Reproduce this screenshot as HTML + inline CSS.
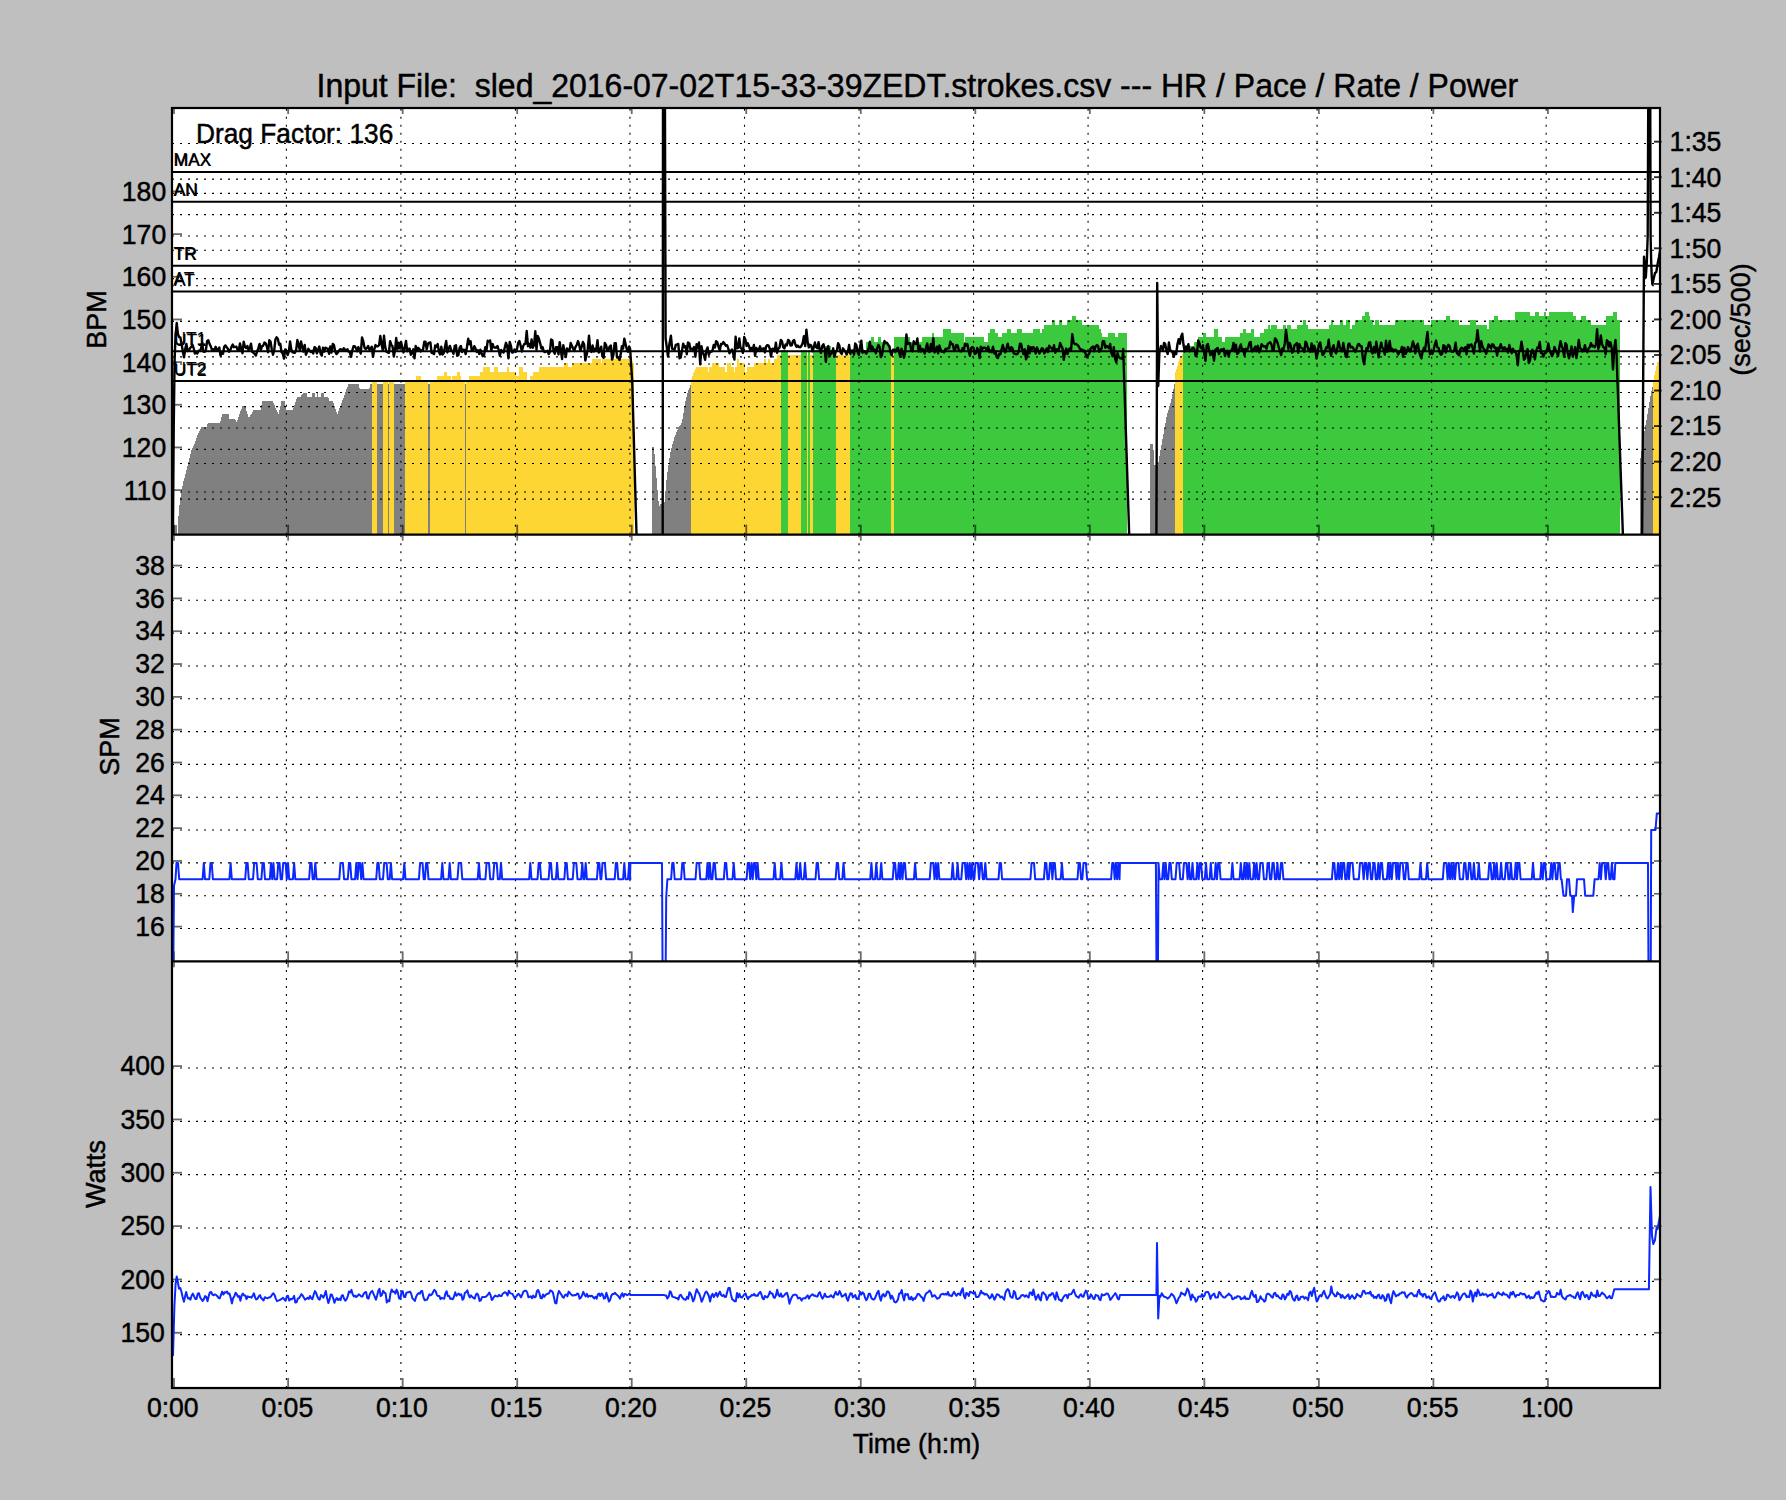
<!DOCTYPE html><html><head><meta charset="utf-8"><title>chart</title><style>html,body{margin:0;padding:0;background:#bfbfbf}svg{display:block}</style></head><body><svg width="1786" height="1500" viewBox="0 0 1786 1500">
<rect width="1786" height="1500" fill="#bfbfbf"/>
<rect x="172.0" y="108.0" width="1488.0" height="1280.0" fill="#fff"/>
<defs><clipPath id="c1"><rect x="172.0" y="108.0" width="1488.0" height="426.66999999999996"/></clipPath><clipPath id="c2"><rect x="172.0" y="534.67" width="1488.0" height="426.6600000000001"/></clipPath><clipPath id="c3"><rect x="172.0" y="961.33" width="1488.0" height="426.66999999999996"/></clipPath></defs>
<g clip-path="url(#c1)" shape-rendering="crispEdges">
<path d="M173.0,534.67V525.1H176.5V533.7H177.5V529.7H178.0V516.3H178.5V509.3H179.0V505.1H179.5V500.8H180.0V496.5H180.5V492.3H181.0V489.6H181.5V487.5H182.0V485.5H182.5V483.4H183.0V481.4H183.5V479.4H184.0V477.5H184.5V475.5H185.0V473.6H185.5V471.6H186.0V469.7H186.5V467.7H187.0V465.7H187.5V463.7H188.0V461.6H188.5V459.6H189.0V457.6H189.5V455.5H190.0V453.5H190.5V451.5H191.0V449.9H191.5V448.9H192.0V447.8H192.5V446.7H193.0V445.7H193.5V444.6H194.0V443.5H194.5V442.2H195.0V440.8H195.5V439.4H196.0V438.0H196.5V436.5H197.0V435.1H197.5V433.7H198.0V432.7H198.5V431.7H199.0V430.7H199.5V429.7H200.0V428.7H200.5V427.7H201.0V427.0H206.0V426.6H206.5V425.4H207.0V424.1H207.5V422.9H208.0V422.7H219.5V422.2H220.0V420.5H220.5V418.8H221.0V417.1H221.5V415.4H222.0V414.2H229.0V418.5H234.5V418.6H235.0V419.9H235.5V421.1H236.0V422.4H236.5V421.7H237.0V420.2H237.5V418.8H238.0V417.3H238.5V415.8H239.0V414.4H239.5V412.9H240.0V411.4H240.5V409.9H241.0V408.5H241.5V407.0H242.0V405.7H245.0V407.2H245.5V408.9H246.0V410.6H246.5V412.2H247.0V413.9H247.5V415.6H248.0V417.3H248.5V418.2H249.0V417.3H249.5V416.3H250.0V415.4H250.5V414.5H251.0V413.6H251.5V412.6H252.0V411.7H252.5V410.8H253.0V409.9H260.5V409.5H261.0V404.7H261.5V401.4H272.5V402.0H273.0V403.1H273.5V404.2H274.0V405.3H274.5V406.4H275.0V407.5H275.5V408.6H276.0V409.7H276.5V410.8H277.0V411.9H277.5V413.0H278.0V414.1H278.5V412.2H279.0V410.0H279.5V407.8H280.0V405.6H280.5V403.4H281.0V401.4H284.5V402.4H285.0V405.7H285.5V409.0H286.0V409.9H292.5V409.5H293.0V408.0H293.5V406.4H294.0V404.9H294.5V403.4H295.0V401.9H295.5V400.3H296.0V398.8H296.5V397.3H297.0V397.1H300.5V396.2H301.0V395.3H301.5V394.5H302.0V393.6H302.5V392.9H306.5V397.1H312.0V392.9H314.5V397.1H317.0V392.9H318.0V397.1H320.5V392.9H323.5V397.1H328.0V398.0H328.5V399.3H329.0V400.5H329.5V401.4H333.0V402.5H333.5V404.0H334.0V405.5H334.5V407.0H335.0V408.6H335.5V410.1H336.0V411.6H336.5V413.1H337.0V413.8H337.5V412.4H338.0V411.1H338.5V409.7H339.0V408.4H339.5V407.0H340.0V405.7H340.5V404.3H341.0V402.9H341.5V401.6H342.0V400.2H342.5V398.9H343.0V397.5H343.5V396.1H344.0V394.8H344.5V393.4H345.0V392.1H345.5V390.7H346.0V389.4H346.5V388.0H347.0V386.6H347.5V385.3H348.0V384.3H358.5V385.9H359.0V387.7H359.5V388.6H369.0V387.8H369.5V385.1H370.0V384.3H372.0V534.67Z" fill="#808080"/>
<path d="M372.0,534.67V380.1H377.0V534.67Z" fill="#fdd633"/>
<path d="M377.0,534.67V384.3H383.0V534.67Z" fill="#808080"/>
<path d="M383.0,534.67V380.1H388.0V534.67Z" fill="#fdd633"/>
<path d="M388.0,534.67V384.3H389.0V534.67Z" fill="#808080"/>
<path d="M389.0,534.67V380.1H394.0V534.67Z" fill="#fdd633"/>
<path d="M394.0,534.67V384.3H405.0V534.67Z" fill="#808080"/>
<path d="M405.0,534.67V380.1H416.0V375.8H420.5V380.1H428.0V534.67Z" fill="#fdd633"/>
<path d="M428.0,534.67V384.3H430.0V534.67Z" fill="#808080"/>
<path d="M430.0,534.67V380.1H436.5V375.8H444.0V371.5H447.0V375.8H450.5V380.1H452.0V375.8H456.5V371.5H460.0V375.8H460.5V380.1H465.0V534.67Z" fill="#fdd633"/>
<path d="M465.0,534.67V384.3H466.0V534.67Z" fill="#808080"/>
<path d="M466.0,534.67V380.1H468.5V375.8H479.5V371.5H482.5V367.3H490.0V371.5H493.5V367.3H498.0V371.5H507.0V367.3H508.5V371.5H515.5V375.8H519.0V367.3H523.0V371.5H527.0V380.1H529.5V375.8H532.5V371.5H538.5V367.3H563.5V363.0H568.0V367.3H572.0V363.0H592.0V358.7H600.5V363.0H601.5V358.7H629.5V363.0H634.0V534.67Z" fill="#fdd633"/>
<path d="M651.5,534.67V447.1H653.5V447.7H654.0V453.6H654.5V459.6H655.0V465.6H655.5V471.5H656.0V477.5H656.5V483.5H657.0V489.5H657.5V495.4H658.0V501.4H658.5V506.7H659.0V505.8H659.5V505.0H660.0V504.1H660.5V503.2H661.0V504.0H661.5V505.5H662.0V507.0H662.5V508.5H663.0V510.1H663.5V506.6H664.0V502.1H664.5V496.6H665.0V491.0H665.5V485.5H666.0V480.0H666.5V475.0H667.0V471.6H667.5V468.1H668.0V464.7H668.5V461.2H669.0V457.8H669.5V454.3H670.0V451.7H670.5V449.9H671.0V448.0H671.5V446.2H672.0V444.4H672.5V442.5H673.0V440.7H673.5V438.9H674.0V437.1H674.5V435.9H675.0V434.7H675.5V433.5H676.0V432.2H676.5V431.0H677.0V429.8H677.5V428.6H678.0V427.4H678.5V426.6H679.0V425.9H679.5V425.3H680.0V424.6H680.5V424.0H681.0V423.3H681.5V422.4H682.0V419.4H682.5V416.3H683.0V413.2H683.5V410.1H684.0V407.1H684.5V404.0H685.0V401.2H685.5V399.3H686.0V397.3H686.5V395.4H687.0V393.4H687.5V391.6H688.0V390.2H688.5V388.8H689.0V387.5H689.5V386.1H690.0V384.7H690.5V383.3H691.0V534.67Z" fill="#808080"/>
<path d="M691.0,534.67V379.2H691.5V377.4H692.0V375.6H692.5V373.8H693.0V372.8H693.5V371.8H694.0V370.9H694.5V369.9H695.0V368.9H695.5V367.9H696.0V367.3H707.5V371.5H709.0V367.3H711.5V363.0H718.5V367.3H725.0V371.5H726.5V363.0H730.5V367.3H734.0V371.5H735.0V367.3H736.5V358.7H739.0V363.0H744.5V371.5H746.5V367.3H754.0V363.0H763.5V358.7H766.0V363.0H768.0V358.7H770.0V363.0H774.0V358.7H777.0V354.5H781.0V534.67Z" fill="#fdd633"/>
<path d="M781.0,534.67V350.2H788.0V534.67Z" fill="#3dc93d"/>
<path d="M788.0,534.67V354.5H801.0V534.67Z" fill="#fdd633"/>
<path d="M801.0,534.67V350.2H807.0V534.67Z" fill="#3dc93d"/>
<path d="M807.0,534.67V354.5H807.5V534.67Z" fill="#fdd633"/>
<path d="M807.5,534.67V350.2H810.0V534.67Z" fill="#3dc93d"/>
<path d="M810.0,534.67V354.5H813.0V534.67Z" fill="#fdd633"/>
<path d="M813.0,534.67V350.2H824.5V345.9H831.0V350.2H836.0V534.67Z" fill="#3dc93d"/>
<path d="M836.0,534.67V354.5H850.0V534.67Z" fill="#fdd633"/>
<path d="M850.0,534.67V350.2H865.5V341.7H871.0V337.4H873.5V341.7H877.5V337.4H881.0V341.7H887.5V345.9H890.5V534.67Z" fill="#3dc93d"/>
<path d="M890.5,534.67V354.5H893.5V534.67Z" fill="#fdd633"/>
<path d="M893.5,534.67V337.4H909.5V341.7H922.0V337.4H931.5V333.1H934.0V337.4H943.0V328.9H950.5V333.1H963.5V341.7H965.0V337.4H983.5V341.7H987.5V333.1H990.0V328.9H994.5V333.1H998.0V337.4H1002.0V333.1H1007.0V328.9H1011.0V333.1H1017.0V328.9H1022.0V333.1H1033.0V328.9H1040.0V333.1H1041.5V328.9H1043.5V324.6H1052.0V320.3H1055.0V324.6H1058.5V320.3H1062.0V324.6H1067.0V320.3H1072.0V316.1H1076.0V320.3H1082.0V324.6H1099.0V328.9H1100.5V333.1H1102.0V337.4H1108.0V333.1H1115.0V337.4H1117.5V333.1H1127.0V534.67Z" fill="#3dc93d"/>
<path d="M1149.5,534.67V444.1H1153.0V449.8H1153.5V458.0H1154.0V465.4H1157.5V464.5H1158.0V461.6H1158.5V458.7H1159.0V455.8H1159.5V452.9H1160.0V450.1H1160.5V447.4H1161.0V444.7H1161.5V442.0H1162.0V439.3H1162.5V436.6H1163.0V433.9H1163.5V431.2H1164.0V428.4H1164.5V425.6H1165.0V422.8H1165.5V420.0H1166.0V417.3H1166.5V414.5H1167.0V412.7H1167.5V411.1H1168.0V409.5H1168.5V407.9H1169.0V406.2H1169.5V404.6H1170.0V403.0H1170.5V401.4H1171.0V399.3H1171.5V396.8H1172.0V394.3H1172.5V391.8H1173.0V389.3H1173.5V386.7H1174.0V384.2H1174.5V383.5H1175.0V534.67Z" fill="#808080"/>
<path d="M1175.0,534.67V371.8H1175.5V370.2H1176.0V368.7H1176.5V367.1H1177.0V365.5H1177.5V363.9H1178.0V362.4H1178.5V360.8H1179.0V359.2H1179.5V358.2H1180.0V357.4H1180.5V356.6H1181.0V355.7H1181.5V354.9H1182.0V354.1H1182.5V353.3H1183.0V534.67Z" fill="#fdd633"/>
<path d="M1183.0,534.67V350.2H1184.0V345.9H1193.5V341.7H1197.5V337.4H1203.0V333.1H1205.5V337.4H1214.0V328.9H1218.0V337.4H1222.0V341.7H1225.0V337.4H1240.0V333.1H1242.5V328.9H1245.5V333.1H1250.5V328.9H1254.0V337.4H1259.5V333.1H1264.0V328.9H1267.5V324.6H1269.5V328.9H1271.0V324.6H1277.0V328.9H1283.0V324.6H1285.5V328.9H1287.0V324.6H1290.5V328.9H1297.0V324.6H1303.0V320.3H1306.0V324.6H1307.5V328.9H1328.5V324.6H1330.5V320.3H1332.5V324.6H1340.0V320.3H1343.0V324.6H1345.5V320.3H1350.0V328.9H1351.5V324.6H1355.0V320.3H1361.5V316.1H1365.0V311.8H1368.5V316.1H1369.5V320.3H1372.5V324.6H1375.0V320.3H1379.0V324.6H1394.5V320.3H1424.0V324.6H1431.0V320.3H1446.0V316.1H1450.0V320.3H1458.5V324.6H1469.5V320.3H1476.0V324.6H1487.0V328.9H1488.5V320.3H1494.0V316.1H1498.0V320.3H1515.0V311.8H1530.0V316.1H1535.0V311.8H1539.0V316.1H1543.5V311.8H1545.5V316.1H1549.0V311.8H1572.5V316.1H1576.0V320.3H1581.0V316.1H1585.5V320.3H1590.5V324.6H1605.5V316.1H1613.0V311.8H1616.5V320.3H1619.5V534.67Z" fill="#3dc93d"/>
<path d="M1639.5,534.67V461.2H1640.0V457.7H1640.5V454.1H1641.0V450.5H1641.5V447.0H1642.0V443.4H1642.5V439.9H1643.0V436.7H1643.5V433.9H1644.0V431.0H1644.5V428.2H1645.0V425.4H1645.5V422.5H1646.0V419.7H1646.5V416.9H1647.0V414.1H1647.5V411.1H1648.0V408.0H1648.5V405.0H1649.0V402.0H1649.5V399.0H1650.0V396.0H1650.5V393.7H1651.0V391.3H1651.5V389.0H1652.0V386.6H1652.5V384.2H1653.0V534.67Z" fill="#808080"/>
<path d="M1653.0,534.67V379.8H1653.5V377.5H1654.0V375.1H1654.5V372.8H1655.0V370.5H1655.5V368.4H1656.0V366.4H1656.5V364.4H1657.0V362.4H1657.5V362.1H1660.0V534.67Z" fill="#fdd633"/>
</g>
<g stroke="#000" stroke-width="1.1" stroke-dasharray="2 6" fill="none">
<line x1="286.39" x2="286.39" y1="534.67" y2="108.0"/>
<line x1="286.39" x2="286.39" y1="961.33" y2="534.67"/>
<line x1="286.39" x2="286.39" y1="1388.0" y2="961.33"/>
<line x1="400.92" x2="400.92" y1="534.67" y2="108.0"/>
<line x1="400.92" x2="400.92" y1="961.33" y2="534.67"/>
<line x1="400.92" x2="400.92" y1="1388.0" y2="961.33"/>
<line x1="515.45" x2="515.45" y1="534.67" y2="108.0"/>
<line x1="515.45" x2="515.45" y1="961.33" y2="534.67"/>
<line x1="515.45" x2="515.45" y1="1388.0" y2="961.33"/>
<line x1="629.97" x2="629.97" y1="534.67" y2="108.0"/>
<line x1="629.97" x2="629.97" y1="961.33" y2="534.67"/>
<line x1="629.97" x2="629.97" y1="1388.0" y2="961.33"/>
<line x1="744.50" x2="744.50" y1="534.67" y2="108.0"/>
<line x1="744.50" x2="744.50" y1="961.33" y2="534.67"/>
<line x1="744.50" x2="744.50" y1="1388.0" y2="961.33"/>
<line x1="859.02" x2="859.02" y1="534.67" y2="108.0"/>
<line x1="859.02" x2="859.02" y1="961.33" y2="534.67"/>
<line x1="859.02" x2="859.02" y1="1388.0" y2="961.33"/>
<line x1="973.55" x2="973.55" y1="534.67" y2="108.0"/>
<line x1="973.55" x2="973.55" y1="961.33" y2="534.67"/>
<line x1="973.55" x2="973.55" y1="1388.0" y2="961.33"/>
<line x1="1088.07" x2="1088.07" y1="534.67" y2="108.0"/>
<line x1="1088.07" x2="1088.07" y1="961.33" y2="534.67"/>
<line x1="1088.07" x2="1088.07" y1="1388.0" y2="961.33"/>
<line x1="1202.60" x2="1202.60" y1="534.67" y2="108.0"/>
<line x1="1202.60" x2="1202.60" y1="961.33" y2="534.67"/>
<line x1="1202.60" x2="1202.60" y1="1388.0" y2="961.33"/>
<line x1="1317.12" x2="1317.12" y1="534.67" y2="108.0"/>
<line x1="1317.12" x2="1317.12" y1="961.33" y2="534.67"/>
<line x1="1317.12" x2="1317.12" y1="1388.0" y2="961.33"/>
<line x1="1431.64" x2="1431.64" y1="534.67" y2="108.0"/>
<line x1="1431.64" x2="1431.64" y1="961.33" y2="534.67"/>
<line x1="1431.64" x2="1431.64" y1="1388.0" y2="961.33"/>
<line x1="1546.17" x2="1546.17" y1="534.67" y2="108.0"/>
<line x1="1546.17" x2="1546.17" y1="961.33" y2="534.67"/>
<line x1="1546.17" x2="1546.17" y1="1388.0" y2="961.33"/>
<line x1="172.0" x2="1660.0" y1="492.00" y2="492.00"/>
<line x1="172.0" x2="1660.0" y1="449.34" y2="449.34"/>
<line x1="172.0" x2="1660.0" y1="406.67" y2="406.67"/>
<line x1="172.0" x2="1660.0" y1="364.00" y2="364.00"/>
<line x1="172.0" x2="1660.0" y1="321.34" y2="321.34"/>
<line x1="172.0" x2="1660.0" y1="278.67" y2="278.67"/>
<line x1="172.0" x2="1660.0" y1="236.00" y2="236.00"/>
<line x1="172.0" x2="1660.0" y1="193.34" y2="193.34"/>
<line x1="172.0" x2="1660.0" y1="143.56" y2="143.56"/>
<line x1="172.0" x2="1660.0" y1="179.11" y2="179.11"/>
<line x1="172.0" x2="1660.0" y1="214.67" y2="214.67"/>
<line x1="172.0" x2="1660.0" y1="250.22" y2="250.22"/>
<line x1="172.0" x2="1660.0" y1="285.78" y2="285.78"/>
<line x1="172.0" x2="1660.0" y1="321.33" y2="321.33"/>
<line x1="172.0" x2="1660.0" y1="356.89" y2="356.89"/>
<line x1="172.0" x2="1660.0" y1="392.44" y2="392.44"/>
<line x1="172.0" x2="1660.0" y1="428.00" y2="428.00"/>
<line x1="172.0" x2="1660.0" y1="463.56" y2="463.56"/>
<line x1="172.0" x2="1660.0" y1="499.11" y2="499.11"/>
<line x1="172.0" x2="1660.0" y1="928.51" y2="928.51"/>
<line x1="172.0" x2="1660.0" y1="895.69" y2="895.69"/>
<line x1="172.0" x2="1660.0" y1="862.87" y2="862.87"/>
<line x1="172.0" x2="1660.0" y1="830.05" y2="830.05"/>
<line x1="172.0" x2="1660.0" y1="797.23" y2="797.23"/>
<line x1="172.0" x2="1660.0" y1="764.41" y2="764.41"/>
<line x1="172.0" x2="1660.0" y1="731.59" y2="731.59"/>
<line x1="172.0" x2="1660.0" y1="698.77" y2="698.77"/>
<line x1="172.0" x2="1660.0" y1="665.94" y2="665.94"/>
<line x1="172.0" x2="1660.0" y1="633.12" y2="633.12"/>
<line x1="172.0" x2="1660.0" y1="600.30" y2="600.30"/>
<line x1="172.0" x2="1660.0" y1="567.48" y2="567.48"/>
<line x1="172.0" x2="1660.0" y1="1334.67" y2="1334.67"/>
<line x1="172.0" x2="1660.0" y1="1281.33" y2="1281.33"/>
<line x1="172.0" x2="1660.0" y1="1228.00" y2="1228.00"/>
<line x1="172.0" x2="1660.0" y1="1174.67" y2="1174.67"/>
<line x1="172.0" x2="1660.0" y1="1121.33" y2="1121.33"/>
<line x1="172.0" x2="1660.0" y1="1068.00" y2="1068.00"/>
</g>
<g stroke="#000" stroke-opacity="0.58" stroke-width="1.8" fill="none">
<line x1="173.0" x2="182.0" y1="490.10" y2="490.10"/>
<line x1="173.0" x2="182.0" y1="447.44" y2="447.44"/>
<line x1="173.0" x2="182.0" y1="404.77" y2="404.77"/>
<line x1="173.0" x2="182.0" y1="362.10" y2="362.10"/>
<line x1="173.0" x2="182.0" y1="319.44" y2="319.44"/>
<line x1="173.0" x2="182.0" y1="276.77" y2="276.77"/>
<line x1="173.0" x2="182.0" y1="234.10" y2="234.10"/>
<line x1="173.0" x2="182.0" y1="191.44" y2="191.44"/>
<line x1="1654.0" x2="1661.5" y1="141.66" y2="141.66"/>
<line x1="1654.0" x2="1661.5" y1="141.66" y2="141.66"/>
<line x1="1654.0" x2="1661.5" y1="177.21" y2="177.21"/>
<line x1="1654.0" x2="1661.5" y1="177.21" y2="177.21"/>
<line x1="1654.0" x2="1661.5" y1="212.77" y2="212.77"/>
<line x1="1654.0" x2="1661.5" y1="212.77" y2="212.77"/>
<line x1="1654.0" x2="1661.5" y1="248.32" y2="248.32"/>
<line x1="1654.0" x2="1661.5" y1="248.32" y2="248.32"/>
<line x1="1654.0" x2="1661.5" y1="283.88" y2="283.88"/>
<line x1="1654.0" x2="1661.5" y1="283.88" y2="283.88"/>
<line x1="1654.0" x2="1661.5" y1="319.43" y2="319.43"/>
<line x1="1654.0" x2="1661.5" y1="319.43" y2="319.43"/>
<line x1="1654.0" x2="1661.5" y1="354.99" y2="354.99"/>
<line x1="1654.0" x2="1661.5" y1="354.99" y2="354.99"/>
<line x1="1654.0" x2="1661.5" y1="390.54" y2="390.54"/>
<line x1="1654.0" x2="1661.5" y1="390.54" y2="390.54"/>
<line x1="1654.0" x2="1661.5" y1="426.10" y2="426.10"/>
<line x1="1654.0" x2="1661.5" y1="426.10" y2="426.10"/>
<line x1="1654.0" x2="1661.5" y1="461.66" y2="461.66"/>
<line x1="1654.0" x2="1661.5" y1="461.66" y2="461.66"/>
<line x1="1654.0" x2="1661.5" y1="497.21" y2="497.21"/>
<line x1="1654.0" x2="1661.5" y1="497.21" y2="497.21"/>
<line x1="173.0" x2="182.0" y1="926.61" y2="926.61"/>
<line x1="1654.0" x2="1661.5" y1="926.61" y2="926.61"/>
<line x1="173.0" x2="182.0" y1="893.79" y2="893.79"/>
<line x1="1654.0" x2="1661.5" y1="893.79" y2="893.79"/>
<line x1="173.0" x2="182.0" y1="860.97" y2="860.97"/>
<line x1="1654.0" x2="1661.5" y1="860.97" y2="860.97"/>
<line x1="173.0" x2="182.0" y1="828.15" y2="828.15"/>
<line x1="1654.0" x2="1661.5" y1="828.15" y2="828.15"/>
<line x1="173.0" x2="182.0" y1="795.33" y2="795.33"/>
<line x1="1654.0" x2="1661.5" y1="795.33" y2="795.33"/>
<line x1="173.0" x2="182.0" y1="762.51" y2="762.51"/>
<line x1="1654.0" x2="1661.5" y1="762.51" y2="762.51"/>
<line x1="173.0" x2="182.0" y1="729.69" y2="729.69"/>
<line x1="1654.0" x2="1661.5" y1="729.69" y2="729.69"/>
<line x1="173.0" x2="182.0" y1="696.87" y2="696.87"/>
<line x1="1654.0" x2="1661.5" y1="696.87" y2="696.87"/>
<line x1="173.0" x2="182.0" y1="664.04" y2="664.04"/>
<line x1="1654.0" x2="1661.5" y1="664.04" y2="664.04"/>
<line x1="173.0" x2="182.0" y1="631.22" y2="631.22"/>
<line x1="1654.0" x2="1661.5" y1="631.22" y2="631.22"/>
<line x1="173.0" x2="182.0" y1="598.40" y2="598.40"/>
<line x1="1654.0" x2="1661.5" y1="598.40" y2="598.40"/>
<line x1="173.0" x2="182.0" y1="565.58" y2="565.58"/>
<line x1="1654.0" x2="1661.5" y1="565.58" y2="565.58"/>
<line x1="173.0" x2="182.0" y1="1332.77" y2="1332.77"/>
<line x1="1654.0" x2="1661.5" y1="1332.77" y2="1332.77"/>
<line x1="173.0" x2="182.0" y1="1279.43" y2="1279.43"/>
<line x1="1654.0" x2="1661.5" y1="1279.43" y2="1279.43"/>
<line x1="173.0" x2="182.0" y1="1226.10" y2="1226.10"/>
<line x1="1654.0" x2="1661.5" y1="1226.10" y2="1226.10"/>
<line x1="173.0" x2="182.0" y1="1172.77" y2="1172.77"/>
<line x1="1654.0" x2="1661.5" y1="1172.77" y2="1172.77"/>
<line x1="173.0" x2="182.0" y1="1119.43" y2="1119.43"/>
<line x1="1654.0" x2="1661.5" y1="1119.43" y2="1119.43"/>
<line x1="173.0" x2="182.0" y1="1066.10" y2="1066.10"/>
<line x1="1654.0" x2="1661.5" y1="1066.10" y2="1066.10"/>
<line x1="174.00" x2="174.00" y1="524.67" y2="533.67"/>
<line x1="174.00" x2="174.00" y1="109.00" y2="114.00"/>
<line x1="174.00" x2="174.00" y1="951.33" y2="960.33"/>
<line x1="174.00" x2="174.00" y1="535.67" y2="540.67"/>
<line x1="174.00" x2="174.00" y1="1378.00" y2="1387.00"/>
<line x1="174.00" x2="174.00" y1="962.33" y2="967.33"/>
<line x1="288.14" x2="288.14" y1="524.67" y2="533.67"/>
<line x1="288.14" x2="288.14" y1="109.00" y2="114.00"/>
<line x1="288.14" x2="288.14" y1="951.33" y2="960.33"/>
<line x1="288.14" x2="288.14" y1="535.67" y2="540.67"/>
<line x1="288.14" x2="288.14" y1="1378.00" y2="1387.00"/>
<line x1="288.14" x2="288.14" y1="962.33" y2="967.33"/>
<line x1="402.67" x2="402.67" y1="524.67" y2="533.67"/>
<line x1="402.67" x2="402.67" y1="109.00" y2="114.00"/>
<line x1="402.67" x2="402.67" y1="951.33" y2="960.33"/>
<line x1="402.67" x2="402.67" y1="535.67" y2="540.67"/>
<line x1="402.67" x2="402.67" y1="1378.00" y2="1387.00"/>
<line x1="402.67" x2="402.67" y1="962.33" y2="967.33"/>
<line x1="517.20" x2="517.20" y1="524.67" y2="533.67"/>
<line x1="517.20" x2="517.20" y1="109.00" y2="114.00"/>
<line x1="517.20" x2="517.20" y1="951.33" y2="960.33"/>
<line x1="517.20" x2="517.20" y1="535.67" y2="540.67"/>
<line x1="517.20" x2="517.20" y1="1378.00" y2="1387.00"/>
<line x1="517.20" x2="517.20" y1="962.33" y2="967.33"/>
<line x1="631.72" x2="631.72" y1="524.67" y2="533.67"/>
<line x1="631.72" x2="631.72" y1="109.00" y2="114.00"/>
<line x1="631.72" x2="631.72" y1="951.33" y2="960.33"/>
<line x1="631.72" x2="631.72" y1="535.67" y2="540.67"/>
<line x1="631.72" x2="631.72" y1="1378.00" y2="1387.00"/>
<line x1="631.72" x2="631.72" y1="962.33" y2="967.33"/>
<line x1="746.25" x2="746.25" y1="524.67" y2="533.67"/>
<line x1="746.25" x2="746.25" y1="109.00" y2="114.00"/>
<line x1="746.25" x2="746.25" y1="951.33" y2="960.33"/>
<line x1="746.25" x2="746.25" y1="535.67" y2="540.67"/>
<line x1="746.25" x2="746.25" y1="1378.00" y2="1387.00"/>
<line x1="746.25" x2="746.25" y1="962.33" y2="967.33"/>
<line x1="860.77" x2="860.77" y1="524.67" y2="533.67"/>
<line x1="860.77" x2="860.77" y1="109.00" y2="114.00"/>
<line x1="860.77" x2="860.77" y1="951.33" y2="960.33"/>
<line x1="860.77" x2="860.77" y1="535.67" y2="540.67"/>
<line x1="860.77" x2="860.77" y1="1378.00" y2="1387.00"/>
<line x1="860.77" x2="860.77" y1="962.33" y2="967.33"/>
<line x1="975.30" x2="975.30" y1="524.67" y2="533.67"/>
<line x1="975.30" x2="975.30" y1="109.00" y2="114.00"/>
<line x1="975.30" x2="975.30" y1="951.33" y2="960.33"/>
<line x1="975.30" x2="975.30" y1="535.67" y2="540.67"/>
<line x1="975.30" x2="975.30" y1="1378.00" y2="1387.00"/>
<line x1="975.30" x2="975.30" y1="962.33" y2="967.33"/>
<line x1="1089.82" x2="1089.82" y1="524.67" y2="533.67"/>
<line x1="1089.82" x2="1089.82" y1="109.00" y2="114.00"/>
<line x1="1089.82" x2="1089.82" y1="951.33" y2="960.33"/>
<line x1="1089.82" x2="1089.82" y1="535.67" y2="540.67"/>
<line x1="1089.82" x2="1089.82" y1="1378.00" y2="1387.00"/>
<line x1="1089.82" x2="1089.82" y1="962.33" y2="967.33"/>
<line x1="1204.35" x2="1204.35" y1="524.67" y2="533.67"/>
<line x1="1204.35" x2="1204.35" y1="109.00" y2="114.00"/>
<line x1="1204.35" x2="1204.35" y1="951.33" y2="960.33"/>
<line x1="1204.35" x2="1204.35" y1="535.67" y2="540.67"/>
<line x1="1204.35" x2="1204.35" y1="1378.00" y2="1387.00"/>
<line x1="1204.35" x2="1204.35" y1="962.33" y2="967.33"/>
<line x1="1318.87" x2="1318.87" y1="524.67" y2="533.67"/>
<line x1="1318.87" x2="1318.87" y1="109.00" y2="114.00"/>
<line x1="1318.87" x2="1318.87" y1="951.33" y2="960.33"/>
<line x1="1318.87" x2="1318.87" y1="535.67" y2="540.67"/>
<line x1="1318.87" x2="1318.87" y1="1378.00" y2="1387.00"/>
<line x1="1318.87" x2="1318.87" y1="962.33" y2="967.33"/>
<line x1="1433.39" x2="1433.39" y1="524.67" y2="533.67"/>
<line x1="1433.39" x2="1433.39" y1="109.00" y2="114.00"/>
<line x1="1433.39" x2="1433.39" y1="951.33" y2="960.33"/>
<line x1="1433.39" x2="1433.39" y1="535.67" y2="540.67"/>
<line x1="1433.39" x2="1433.39" y1="1378.00" y2="1387.00"/>
<line x1="1433.39" x2="1433.39" y1="962.33" y2="967.33"/>
<line x1="1547.92" x2="1547.92" y1="524.67" y2="533.67"/>
<line x1="1547.92" x2="1547.92" y1="109.00" y2="114.00"/>
<line x1="1547.92" x2="1547.92" y1="951.33" y2="960.33"/>
<line x1="1547.92" x2="1547.92" y1="535.67" y2="540.67"/>
<line x1="1547.92" x2="1547.92" y1="1378.00" y2="1387.00"/>
<line x1="1547.92" x2="1547.92" y1="962.33" y2="967.33"/>
</g>
<g stroke="#000" stroke-width="2" fill="none">
<line x1="172.0" x2="1660.0" y1="172.00" y2="172.00"/>
<line x1="172.0" x2="1660.0" y1="201.87" y2="201.87"/>
<line x1="172.0" x2="1660.0" y1="265.87" y2="265.87"/>
<line x1="172.0" x2="1660.0" y1="291.47" y2="291.47"/>
<line x1="172.0" x2="1660.0" y1="351.20" y2="351.20"/>
<line x1="172.0" x2="1660.0" y1="381.07" y2="381.07"/>
</g>
<g font-family="Liberation Sans, sans-serif" font-size="17.2" fill="#000">
<text x="174.3" y="166.4">MAX</text>
<text x="174.3" y="196.3">AN</text>
<text x="174.3" y="260.3">TR</text>
<text x="174.3" y="285.9">AT</text>
<text x="174.3" y="345.6">UT1</text>
<text x="174.3" y="375.5">UT2</text>
</g>
<path d="M172.9,537.7 L173.7,430.0 L174.6,360.0 L175.6,335.0 L176.7,323.0 L177.9,334.0 L179.1,337.0 L180.3,337.3 L181.4,343.0 L182.6,350.0 L184.0,357.3 L185.2,349.0 L186.4,344.0 L187.6,351.0 L188.8,350.7 L190.0,348.2 L191.2,346.9 L192.5,344.8 L193.7,348.2 L194.9,353.6 L196.1,352.0 L197.3,353.5 L198.6,350.8 L199.8,350.8 L201.0,348.8 L202.2,342.8 L203.4,351.6 L204.7,351.8 L205.9,350.1 L207.1,341.2 L208.3,340.2 L209.5,343.8 L210.8,346.6 L212.0,349.7 L213.2,349.2 L214.4,350.5 L215.6,346.8 L216.9,349.9 L218.1,350.2 L219.3,347.5 L220.5,355.7 L221.7,353.0 L223.0,353.7 L224.2,346.7 L225.4,345.4 L226.6,347.1 L227.8,348.8 L229.1,351.7 L230.3,350.2 L231.5,346.8 L232.7,344.6 L233.9,347.2 L235.2,346.9 L236.4,346.8 L237.6,349.9 L238.8,350.1 L240.0,343.5 L241.3,349.3 L242.5,353.2 L243.7,341.7 L244.9,346.5 L246.1,348.0 L247.4,346.0 L248.6,350.5 L249.8,348.2 L251.0,343.6 L252.2,351.8 L253.5,352.7 L254.7,354.0 L255.9,355.5 L257.1,351.2 L258.3,348.6 L259.6,343.9 L260.8,349.9 L262.0,346.3 L263.2,345.6 L264.4,342.6 L265.7,343.5 L266.9,346.7 L268.1,352.2 L269.3,340.3 L270.5,341.5 L271.8,349.5 L273.0,354.8 L274.2,350.5 L275.4,339.5 L276.6,337.2 L277.9,338.9 L279.1,344.8 L280.3,343.8 L281.5,352.1 L282.7,353.3 L284.0,358.6 L285.2,349.4 L286.4,350.9 L287.6,355.0 L288.8,351.7 L290.1,341.5 L291.3,349.4 L292.5,352.3 L293.7,352.6 L294.9,352.9 L296.2,349.4 L297.4,340.0 L298.6,344.8 L299.8,350.0 L301.0,341.4 L302.3,347.1 L303.5,351.6 L304.7,344.9 L305.9,354.7 L307.1,351.9 L308.4,348.8 L309.6,350.6 L310.8,352.0 L312.0,350.8 L313.2,353.5 L314.5,347.1 L315.7,347.9 L316.9,353.4 L318.1,349.6 L319.3,346.5 L320.6,353.6 L321.8,355.6 L323.0,347.6 L324.2,351.6 L325.4,347.7 L326.7,348.3 L327.9,348.7 L329.1,353.8 L330.3,346.5 L331.5,352.5 L332.8,344.0 L334.0,345.1 L335.2,351.4 L336.4,354.1 L337.6,352.9 L338.9,350.5 L340.1,349.3 L341.3,349.5 L342.5,350.7 L343.7,348.2 L345.0,349.7 L346.2,350.8 L347.4,349.2 L348.6,351.7 L349.8,352.3 L351.1,356.9 L352.3,350.4 L353.5,346.3 L354.7,346.1 L355.9,348.1 L357.2,351.3 L358.4,347.1 L359.6,350.1 L360.8,353.5 L362.0,337.5 L363.3,341.3 L364.5,347.8 L365.7,349.2 L366.9,348.1 L368.1,346.0 L369.4,349.7 L370.6,348.4 L371.8,346.8 L373.0,356.9 L374.2,349.8 L375.5,345.1 L376.7,346.3 L377.9,346.2 L379.1,345.1 L380.3,335.9 L381.6,344.2 L382.8,350.3 L384.0,335.8 L385.2,346.9 L386.4,351.7 L387.7,352.4 L388.9,352.9 L390.1,341.2 L391.3,344.7 L392.5,346.2 L393.8,356.6 L395.0,350.5 L396.2,338.0 L397.4,349.2 L398.6,342.7 L399.9,348.4 L401.1,342.0 L402.3,348.1 L403.5,352.4 L404.7,347.9 L406.0,341.0 L407.2,351.2 L408.4,348.9 L409.6,348.6 L410.8,354.8 L412.1,353.0 L413.3,349.3 L414.5,358.3 L415.7,345.9 L416.9,351.0 L418.2,347.8 L419.4,349.1 L420.6,351.4 L421.8,350.1 L423.0,350.0 L424.3,341.6 L425.5,341.6 L426.7,349.2 L427.9,344.1 L429.1,342.6 L430.4,342.5 L431.6,352.9 L432.8,353.0 L434.0,354.1 L435.2,345.4 L436.5,346.9 L437.7,344.1 L438.9,351.6 L440.1,354.5 L441.3,346.6 L442.6,354.5 L443.8,353.0 L445.0,346.8 L446.2,341.0 L447.4,352.5 L448.7,348.3 L449.9,345.9 L451.1,349.7 L452.3,351.0 L453.5,353.9 L454.8,345.8 L456.0,345.3 L457.2,355.9 L458.4,355.0 L459.6,348.0 L460.9,345.9 L462.1,352.1 L463.3,349.6 L464.5,349.9 L465.7,354.1 L467.0,346.8 L468.2,338.8 L469.4,344.3 L470.6,341.3 L471.8,350.8 L473.1,349.9 L474.3,346.2 L475.5,348.6 L476.7,351.9 L477.9,350.2 L479.2,353.9 L480.4,349.7 L481.6,353.6 L482.8,356.2 L484.0,355.5 L485.3,347.3 L486.5,350.3 L487.7,340.7 L488.9,341.6 L490.1,340.4 L491.4,350.6 L492.6,344.0 L493.8,347.4 L495.0,347.5 L496.2,347.7 L497.5,346.0 L498.7,350.0 L499.9,355.7 L501.1,350.0 L502.3,351.1 L503.6,352.6 L504.8,347.4 L506.0,342.8 L507.2,346.0 L508.4,358.4 L509.7,342.0 L510.9,345.6 L512.1,352.6 L513.3,352.3 L514.5,349.5 L515.8,351.8 L517.0,348.9 L518.2,342.8 L519.4,341.0 L520.6,345.5 L521.9,351.5 L523.1,346.3 L524.3,344.0 L525.5,343.9 L526.7,331.0 L528.0,346.3 L529.2,343.9 L530.4,347.7 L531.6,339.4 L532.8,347.9 L534.1,344.8 L535.3,331.3 L536.5,349.9 L537.7,336.0 L538.9,338.6 L540.2,343.5 L541.4,348.6 L542.6,347.1 L543.8,351.5 L545.0,352.1 L546.3,351.5 L547.5,350.7 L548.7,354.1 L549.9,351.9 L551.1,339.5 L552.4,340.5 L553.6,351.2 L554.8,353.7 L556.0,347.3 L557.2,347.1 L558.5,354.3 L559.7,342.2 L560.9,350.5 L562.1,359.1 L563.3,345.3 L564.6,351.5 L565.8,357.0 L567.0,348.4 L568.2,350.4 L569.4,351.1 L570.7,343.0 L571.9,345.8 L573.1,348.7 L574.3,350.9 L575.5,346.9 L576.8,344.8 L578.0,341.1 L579.2,344.7 L580.4,350.8 L581.6,347.2 L582.9,342.0 L584.1,344.2 L585.3,360.5 L586.5,355.4 L587.7,349.4 L589.0,335.7 L590.2,349.1 L591.4,352.0 L592.6,345.5 L593.8,351.5 L595.1,348.7 L596.3,349.5 L597.5,340.2 L598.7,352.5 L599.9,350.6 L601.2,346.7 L602.4,356.3 L603.6,357.8 L604.8,342.9 L606.0,344.8 L607.3,350.0 L608.5,349.8 L609.7,346.4 L610.9,345.6 L612.1,359.6 L613.4,355.0 L614.6,343.1 L615.8,343.1 L617.0,357.5 L618.2,357.1 L619.5,359.9 L620.7,354.3 L621.9,346.1 L623.1,348.6 L624.3,338.6 L625.6,344.3 L626.8,349.3 L628.0,351.7 L629.2,346.5 L630.1,348.6 L631.0,362.0 L632.2,381.0 L636.6,537.7 L662.7,537.7 L663.0,88.0 L664.9,88.0 L665.6,338.0 L666.6,346.0 L668.0,356.5 L669.4,344.0 L670.9,335.7 L672.2,349.0 L673.4,349.1 L674.6,349.5 L675.8,344.9 L677.1,344.4 L678.3,343.9 L679.5,358.3 L680.7,357.5 L681.9,351.1 L683.2,343.7 L684.4,347.2 L685.6,346.2 L686.8,354.2 L688.0,342.4 L689.3,343.4 L690.5,349.6 L691.7,348.7 L692.9,349.5 L694.1,347.0 L695.4,356.7 L696.6,344.1 L697.8,348.2 L699.0,342.5 L700.2,364.4 L701.5,346.3 L702.7,352.4 L703.9,354.9 L705.1,359.8 L706.3,350.5 L707.6,347.4 L708.8,354.9 L710.0,351.7 L711.2,351.7 L712.4,351.1 L713.7,344.9 L714.9,347.6 L716.1,341.3 L717.3,342.2 L718.5,346.8 L719.8,350.4 L721.0,344.0 L722.2,344.1 L723.4,342.1 L724.6,343.8 L725.9,345.7 L727.1,345.2 L728.3,348.6 L729.5,353.3 L730.7,350.9 L732.0,349.5 L733.2,353.7 L734.4,359.6 L735.6,336.7 L736.8,348.4 L738.1,347.9 L739.3,338.5 L740.5,347.9 L741.7,348.8 L742.9,352.8 L744.2,337.0 L745.4,339.7 L746.6,345.9 L747.8,343.3 L749.0,346.2 L750.3,350.3 L751.5,347.9 L752.7,350.0 L753.9,345.0 L755.1,355.8 L756.4,348.0 L757.6,351.0 L758.8,349.7 L760.0,346.3 L761.2,350.1 L762.5,348.9 L763.7,348.3 L764.9,352.4 L766.1,346.5 L767.3,345.1 L768.6,345.7 L769.8,348.7 L771.0,356.6 L772.2,349.0 L773.4,348.6 L774.7,351.2 L775.9,342.6 L777.1,352.8 L778.3,348.7 L779.5,347.7 L780.8,339.9 L782.0,341.3 L783.2,347.2 L784.4,348.4 L785.6,344.4 L786.9,345.3 L788.1,339.9 L789.3,341.0 L790.5,345.5 L791.7,345.3 L793.0,340.9 L794.2,340.1 L795.4,344.7 L796.6,346.8 L797.8,345.6 L799.1,347.1 L800.3,347.2 L801.5,345.7 L802.7,343.0 L803.9,336.1 L805.2,346.1 L806.4,329.6 L807.6,341.2 L808.8,347.4 L810.0,344.8 L811.3,345.5 L812.5,351.4 L813.7,347.7 L814.9,342.5 L816.1,347.1 L817.4,348.3 L818.6,342.1 L819.8,350.8 L821.0,352.8 L822.2,346.0 L823.5,344.3 L824.7,348.7 L825.9,361.8 L827.1,348.5 L828.3,346.1 L829.6,356.3 L830.8,353.6 L832.0,353.0 L833.2,348.3 L834.4,356.9 L835.7,352.0 L836.9,350.8 L838.1,343.1 L839.3,345.3 L840.5,352.4 L841.8,353.9 L843.0,348.3 L844.2,350.3 L845.4,351.8 L846.6,354.6 L847.9,351.9 L849.1,345.0 L850.3,353.8 L851.5,350.6 L852.7,350.5 L854.0,354.6 L855.2,343.5 L856.4,345.2 L857.6,352.1 L858.8,354.9 L860.1,346.4 L861.3,340.6 L862.5,352.7 L863.7,351.0 L864.9,352.0 L866.2,353.6 L867.4,351.6 L868.6,348.5 L869.8,341.7 L871.0,349.1 L872.3,346.6 L873.5,350.0 L874.7,349.7 L875.9,353.3 L877.1,348.3 L878.4,344.8 L879.6,347.1 L880.8,357.0 L882.0,355.1 L883.2,346.8 L884.5,341.0 L885.7,343.1 L886.9,342.7 L888.1,344.7 L889.3,346.1 L890.6,352.4 L891.8,355.3 L893.0,349.7 L894.2,349.7 L895.4,351.9 L896.7,348.6 L897.9,347.7 L899.1,351.9 L900.3,356.8 L901.5,348.7 L902.8,352.6 L904.0,357.7 L905.2,351.9 L906.4,334.4 L907.6,344.0 L908.9,342.9 L910.1,343.4 L911.3,350.5 L912.5,351.3 L913.7,341.3 L915.0,343.6 L916.2,344.0 L917.4,338.4 L918.6,351.6 L919.8,345.7 L921.1,351.5 L922.3,349.1 L923.5,349.6 L924.7,353.6 L925.9,348.2 L927.2,343.4 L928.4,350.9 L929.6,352.0 L930.8,344.1 L932.0,349.5 L933.3,338.1 L934.5,352.5 L935.7,351.1 L936.9,346.7 L938.1,353.2 L939.4,345.5 L940.6,349.2 L941.8,351.7 L943.0,351.0 L944.2,352.4 L945.5,348.8 L946.7,349.1 L947.9,348.3 L949.1,348.4 L950.3,341.7 L951.6,344.1 L952.8,344.2 L954.0,350.1 L955.2,349.3 L956.4,344.9 L957.7,345.5 L958.9,350.5 L960.1,351.1 L961.3,351.4 L962.5,348.2 L963.8,350.5 L965.0,343.6 L966.2,345.5 L967.4,344.1 L968.6,350.8 L969.9,355.8 L971.1,348.2 L972.3,347.1 L973.5,347.8 L974.7,354.1 L976.0,353.2 L977.2,348.0 L978.4,350.6 L979.6,358.0 L980.8,346.7 L982.1,349.4 L983.3,347.8 L984.5,347.6 L985.7,348.3 L986.9,350.7 L988.2,346.6 L989.4,352.1 L990.6,350.4 L991.8,352.3 L993.0,346.7 L994.3,353.6 L995.5,351.2 L996.7,357.1 L997.9,358.1 L999.1,354.0 L1000.4,354.3 L1001.6,349.4 L1002.8,345.0 L1004.0,349.4 L1005.2,352.4 L1006.5,348.4 L1007.7,343.6 L1008.9,348.3 L1010.1,349.9 L1011.3,347.2 L1012.6,348.5 L1013.8,353.4 L1015.0,353.8 L1016.2,354.3 L1017.4,354.0 L1018.7,351.7 L1019.9,343.7 L1021.1,343.9 L1022.3,349.4 L1023.5,354.1 L1024.8,349.3 L1026.0,359.4 L1027.2,356.3 L1028.4,346.0 L1029.6,353.2 L1030.9,347.2 L1032.1,348.8 L1033.3,347.0 L1034.5,348.7 L1035.7,353.5 L1037.0,347.4 L1038.2,351.0 L1039.4,353.5 L1040.6,350.8 L1041.8,348.3 L1043.1,348.9 L1044.3,353.4 L1045.5,351.0 L1046.7,348.4 L1047.9,352.1 L1049.2,345.8 L1050.4,347.4 L1051.6,348.3 L1052.8,349.6 L1054.0,345.2 L1055.3,352.7 L1056.5,349.5 L1057.7,349.1 L1058.9,349.2 L1060.1,343.0 L1061.4,346.0 L1062.6,348.6 L1063.8,359.8 L1065.0,352.3 L1066.2,348.6 L1067.5,354.1 L1068.7,349.8 L1069.9,348.2 L1071.1,349.8 L1072.3,334.1 L1073.6,342.6 L1074.8,344.2 L1076.0,343.9 L1077.2,344.8 L1078.4,345.9 L1079.7,348.5 L1080.9,349.9 L1082.1,349.4 L1083.3,351.3 L1084.5,350.6 L1085.8,354.6 L1087.0,357.3 L1088.2,355.0 L1089.4,353.2 L1090.6,348.8 L1091.9,347.3 L1093.1,346.5 L1094.3,351.3 L1095.5,346.7 L1096.7,345.1 L1098.0,345.8 L1099.2,351.8 L1100.4,349.4 L1101.6,348.8 L1102.8,341.2 L1104.1,341.1 L1105.3,347.9 L1106.5,345.9 L1107.7,346.5 L1108.9,348.2 L1110.2,343.9 L1111.4,353.3 L1112.6,356.2 L1113.8,347.2 L1115.0,358.3 L1116.3,362.3 L1117.5,353.1 L1118.7,356.9 L1119.9,358.0 L1121.1,358.3 L1122.4,358.8 L1123.2,349.0 L1129.3,537.7 L1156.4,537.7 L1157.2,283.0 L1158.2,386.0 L1159.4,352.0 L1161.0,346.0 L1163.0,350.0 L1164.0,342.9 L1165.2,344.0 L1166.4,350.4 L1167.7,354.0 L1168.9,342.5 L1170.1,349.7 L1171.3,351.4 L1172.5,351.9 L1173.8,356.8 L1175.0,352.6 L1176.2,354.0 L1177.4,344.5 L1178.6,339.2 L1179.9,343.7 L1181.1,336.4 L1182.3,333.7 L1183.5,344.8 L1184.7,351.5 L1186.0,346.5 L1187.2,349.5 L1188.4,344.1 L1189.6,351.2 L1190.8,350.9 L1192.1,348.6 L1193.3,347.8 L1194.5,349.4 L1195.7,356.0 L1196.9,354.3 L1198.2,340.4 L1199.4,343.1 L1200.6,347.8 L1201.8,348.6 L1203.0,345.3 L1204.3,354.2 L1205.5,360.7 L1206.7,345.5 L1207.9,343.9 L1209.1,350.0 L1210.4,355.1 L1211.6,353.9 L1212.8,350.8 L1214.0,360.7 L1215.2,350.0 L1216.5,349.1 L1217.7,347.9 L1218.9,354.0 L1220.1,350.6 L1221.3,349.3 L1222.6,350.4 L1223.8,348.8 L1225.0,356.1 L1226.2,351.1 L1227.4,350.7 L1228.7,356.5 L1229.9,351.0 L1231.1,350.6 L1232.3,349.2 L1233.5,342.9 L1234.8,351.4 L1236.0,344.8 L1237.2,354.0 L1238.4,352.8 L1239.6,347.4 L1240.9,344.4 L1242.1,351.1 L1243.3,349.1 L1244.5,355.4 L1245.7,348.6 L1247.0,349.4 L1248.2,348.3 L1249.4,343.0 L1250.6,341.9 L1251.8,351.4 L1253.1,351.1 L1254.3,348.3 L1255.5,346.5 L1256.7,351.0 L1257.9,345.8 L1259.2,352.2 L1260.4,350.1 L1261.6,344.2 L1262.8,345.5 L1264.0,346.7 L1265.3,346.2 L1266.5,348.7 L1267.7,344.0 L1268.9,343.1 L1270.1,342.2 L1271.4,344.1 L1272.6,350.4 L1273.8,349.5 L1275.0,338.4 L1276.2,339.6 L1277.5,342.8 L1278.7,347.2 L1279.9,350.8 L1281.1,355.2 L1282.3,348.5 L1283.6,349.3 L1284.8,343.4 L1286.0,329.7 L1287.2,339.4 L1288.4,349.0 L1289.7,342.9 L1290.9,346.2 L1292.1,352.7 L1293.3,351.6 L1294.5,345.3 L1295.8,344.2 L1297.0,343.0 L1298.2,352.8 L1299.4,344.1 L1300.6,347.4 L1301.9,348.4 L1303.1,348.7 L1304.3,352.0 L1305.5,341.6 L1306.7,343.5 L1308.0,349.1 L1309.2,349.0 L1310.4,352.0 L1311.6,343.5 L1312.8,351.6 L1314.1,345.7 L1315.3,349.1 L1316.5,358.6 L1317.7,352.7 L1318.9,344.5 L1320.2,342.5 L1321.4,349.3 L1322.6,355.1 L1323.8,353.9 L1325.0,351.0 L1326.3,347.3 L1327.5,347.9 L1328.7,339.7 L1329.9,349.9 L1331.1,355.8 L1332.4,348.0 L1333.6,345.2 L1334.8,350.6 L1336.0,353.3 L1337.2,349.1 L1338.5,341.5 L1339.7,346.6 L1340.9,350.3 L1342.1,351.2 L1343.3,342.9 L1344.6,350.0 L1345.8,356.7 L1347.0,357.0 L1348.2,344.3 L1349.4,343.5 L1350.7,347.6 L1351.9,346.7 L1353.1,347.7 L1354.3,350.6 L1355.5,352.0 L1356.8,347.8 L1358.0,344.3 L1359.2,344.0 L1360.4,346.2 L1361.6,346.1 L1362.9,358.6 L1364.1,364.2 L1365.3,355.1 L1366.5,348.1 L1367.7,349.1 L1369.0,342.6 L1370.2,342.3 L1371.4,351.7 L1372.6,353.5 L1373.8,346.9 L1375.1,352.6 L1376.3,341.8 L1377.5,350.1 L1378.7,357.3 L1379.9,348.4 L1381.2,342.6 L1382.4,347.9 L1383.6,349.2 L1384.8,354.6 L1386.0,340.7 L1387.3,351.9 L1388.5,348.8 L1389.7,340.9 L1390.9,350.4 L1392.1,348.7 L1393.4,351.4 L1394.6,349.8 L1395.8,349.7 L1397.0,351.2 L1398.2,354.5 L1399.5,351.7 L1400.7,351.7 L1401.9,346.9 L1403.1,356.8 L1404.3,347.6 L1405.6,353.9 L1406.8,351.4 L1408.0,347.1 L1409.2,349.8 L1410.4,351.5 L1411.7,346.7 L1412.9,341.4 L1414.1,345.3 L1415.3,353.4 L1416.5,346.1 L1417.8,343.8 L1419.0,350.7 L1420.2,355.5 L1421.4,358.4 L1422.6,351.7 L1423.9,347.8 L1425.1,350.3 L1426.3,340.6 L1427.5,332.0 L1428.7,346.0 L1430.0,354.3 L1431.2,352.0 L1432.4,354.0 L1433.6,350.1 L1434.8,344.6 L1436.1,340.6 L1437.3,347.4 L1438.5,347.8 L1439.7,352.5 L1440.9,354.7 L1442.2,353.8 L1443.4,345.3 L1444.6,345.8 L1445.8,352.6 L1447.0,347.8 L1448.3,344.8 L1449.5,345.8 L1450.7,350.6 L1451.9,351.9 L1453.1,351.7 L1454.4,349.9 L1455.6,342.7 L1456.8,352.7 L1458.0,354.3 L1459.2,355.2 L1460.5,348.8 L1461.7,347.7 L1462.9,348.6 L1464.1,349.7 L1465.3,347.2 L1466.6,354.2 L1467.8,344.6 L1469.0,347.7 L1470.2,344.9 L1471.4,344.4 L1472.7,348.0 L1473.9,353.6 L1475.1,343.2 L1476.3,341.7 L1477.5,330.2 L1478.8,342.2 L1480.0,351.5 L1481.2,341.1 L1482.4,346.4 L1483.6,348.7 L1484.9,350.1 L1486.1,353.8 L1487.3,349.6 L1488.5,344.4 L1489.7,345.8 L1491.0,348.6 L1492.2,344.3 L1493.4,344.6 L1494.6,348.0 L1495.8,347.7 L1497.1,355.5 L1498.3,347.8 L1499.5,349.1 L1500.7,344.2 L1501.9,347.7 L1503.2,349.5 L1504.4,347.2 L1505.6,349.3 L1506.8,348.9 L1508.0,352.6 L1509.3,345.0 L1510.5,349.5 L1511.7,353.2 L1512.9,348.8 L1514.1,351.9 L1515.4,351.0 L1516.6,355.5 L1517.8,365.2 L1519.0,350.9 L1520.2,350.8 L1521.5,341.7 L1522.7,348.6 L1523.9,359.7 L1525.1,358.5 L1526.3,353.2 L1527.6,349.1 L1528.8,363.1 L1530.0,360.5 L1531.2,352.4 L1532.4,349.7 L1533.7,353.8 L1534.9,359.4 L1536.1,351.5 L1537.3,347.6 L1538.5,348.1 L1539.8,341.9 L1541.0,353.1 L1542.2,353.1 L1543.4,356.6 L1544.6,353.4 L1545.9,352.9 L1547.1,350.4 L1548.3,343.5 L1549.5,350.0 L1550.7,352.8 L1552.0,356.2 L1553.2,353.6 L1554.4,347.0 L1555.6,349.8 L1556.8,352.7 L1558.1,355.9 L1559.3,347.5 L1560.5,341.3 L1561.7,345.9 L1562.9,349.1 L1564.2,356.8 L1565.4,343.2 L1566.6,344.8 L1567.8,353.8 L1569.0,358.3 L1570.3,352.7 L1571.5,346.5 L1572.7,356.4 L1573.9,353.0 L1575.1,347.1 L1576.4,358.1 L1577.6,349.8 L1578.8,339.9 L1580.0,348.4 L1581.2,348.8 L1582.5,351.5 L1583.7,350.2 L1584.9,345.2 L1586.1,350.4 L1587.3,352.2 L1588.6,348.4 L1589.8,347.1 L1591.0,343.2 L1592.2,346.4 L1593.4,345.8 L1594.7,347.3 L1595.9,345.0 L1597.1,329.2 L1598.3,349.0 L1599.5,345.3 L1600.8,335.5 L1602.0,343.6 L1603.2,347.1 L1604.4,347.6 L1605.6,354.2 L1606.9,340.3 L1608.1,341.3 L1609.3,346.4 L1610.5,342.3 L1611.7,347.8 L1613.0,369.5 L1614.4,347.0 L1615.5,340.0 L1616.5,353.0 L1623.0,537.7 L1642.1,537.7 L1644.0,256.7 L1645.0,268.0 L1645.8,277.5 L1646.8,262.0 L1647.7,236.0 L1648.3,88.0 L1650.2,88.0 L1650.6,236.0 L1651.2,262.0 L1651.7,276.0 L1652.4,284.5 L1653.6,279.0 L1655.0,273.0 L1656.3,272.0 L1657.6,264.0 L1659.0,257.0 L1661.0,245.0" fill="none" stroke="#000" stroke-width="2.4" stroke-linejoin="round" clip-path="url(#c1)"/>
<path d="M173.2,975.0 L174.0,885.8 L175.5,879.3 L176.5,862.9 L178.0,862.9 L179.2,879.3 L180.0,879.3 L202.6,879.3 L203.8,862.9 L203.8,862.9 L205.0,879.3 L209.3,879.3 L210.5,862.9 L211.7,862.9 L212.9,879.3 L229.4,879.3 L230.6,862.9 L230.6,862.9 L231.8,879.3 L245.2,879.3 L246.4,862.9 L247.6,862.9 L248.8,879.3 L253.0,879.3 L254.2,862.9 L256.6,862.9 L257.8,879.3 L261.4,879.3 L262.6,862.9 L263.8,862.9 L265.0,879.3 L269.8,879.3 L271.0,862.9 L271.0,862.9 L272.2,879.3 L272.2,879.3 L273.4,862.9 L273.4,862.9 L274.6,879.3 L277.1,879.3 L278.3,862.9 L279.5,862.9 L280.7,879.3 L282.0,879.3 L283.2,862.9 L285.6,862.9 L286.8,879.3 L286.8,879.3 L288.0,862.9 L288.0,862.9 L289.2,879.3 L292.9,879.3 L294.1,862.9 L294.1,862.9 L295.3,879.3 L309.1,879.3 L310.3,862.9 L311.5,862.9 L312.7,879.3 L314.1,879.3 L315.3,862.9 L315.3,862.9 L316.5,879.3 L339.3,879.3 L340.5,862.9 L342.9,862.9 L344.1,879.3 L347.8,879.3 L349.0,862.9 L350.2,862.9 L351.4,879.3 L355.1,879.3 L356.3,862.9 L356.3,862.9 L357.5,879.3 L357.6,879.3 L358.8,862.9 L360.0,862.9 L361.2,879.3 L361.2,879.3 L362.4,862.9 L362.4,862.9 L363.6,879.3 L376.2,879.3 L377.4,862.9 L378.6,862.9 L379.8,879.3 L383.0,879.3 L384.2,862.9 L386.6,862.9 L387.8,879.3 L389.7,879.3 L390.9,862.9 L390.9,862.9 L392.1,879.3 L403.1,879.3 L404.3,862.9 L404.3,862.9 L405.5,879.3 L418.9,879.3 L420.1,862.9 L422.5,862.9 L423.7,879.3 L424.9,879.3 L426.1,862.9 L427.3,862.9 L428.5,879.3 L441.1,879.3 L442.3,862.9 L442.3,862.9 L443.5,879.3 L448.5,879.3 L449.7,862.9 L449.7,862.9 L450.9,879.3 L457.5,879.3 L458.7,862.9 L461.1,862.9 L462.3,879.3 L477.7,879.3 L478.9,862.9 L478.9,862.9 L480.1,879.3 L485.4,879.3 L486.6,862.9 L489.0,862.9 L490.2,879.3 L493.1,879.3 L494.3,862.9 L496.7,862.9 L497.9,879.3 L499.8,879.3 L501.0,862.9 L501.0,862.9 L502.2,879.3 L529.1,879.3 L530.3,862.9 L530.3,862.9 L531.5,879.3 L537.5,879.3 L538.7,862.9 L539.9,862.9 L541.1,879.3 L548.6,879.3 L549.8,862.9 L551.0,862.9 L552.2,879.3 L555.9,879.3 L557.1,862.9 L557.1,862.9 L558.3,879.3 L564.3,879.3 L565.5,862.9 L566.7,862.9 L567.9,879.3 L572.7,879.3 L573.9,862.9 L576.3,862.9 L577.5,879.3 L581.1,879.3 L582.3,862.9 L582.3,862.9 L583.5,879.3 L584.5,879.3 L585.7,862.9 L585.7,862.9 L586.9,879.3 L596.9,879.3 L598.1,862.9 L599.3,862.9 L600.5,879.3 L601.3,879.3 L602.5,862.9 L604.9,862.9 L606.1,879.3 L614.7,879.3 L615.9,862.9 L617.1,862.9 L618.3,879.3 L623.1,879.3 L624.3,862.9 L624.3,862.9 L625.5,879.3 L628.0,879.3 L629.2,862.9 L629.2,862.9 L630.4,879.3 L630.0,879.3 L630.4,862.9 L662.0,862.9 L662.6,975.0 L665.6,975.0 L666.2,897.3 L667.4,879.3 L668.4,879.3 L669.0,879.3 L671.1,879.3 L672.3,862.9 L673.5,862.9 L674.7,879.3 L681.1,879.3 L682.3,862.9 L683.5,862.9 L684.7,879.3 L695.5,879.3 L696.7,862.9 L699.1,862.9 L700.3,879.3 L706.3,879.3 L707.5,862.9 L707.5,862.9 L708.7,879.3 L708.7,879.3 L709.9,862.9 L709.9,862.9 L711.1,879.3 L712.4,879.3 L713.6,862.9 L714.8,862.9 L716.0,879.3 L723.8,879.3 L725.0,862.9 L726.2,862.9 L727.4,879.3 L732.5,879.3 L733.7,862.9 L733.7,862.9 L734.9,879.3 L746.6,879.3 L747.8,862.9 L749.0,862.9 L750.2,879.3 L750.3,879.3 L751.5,862.9 L751.5,862.9 L752.7,879.3 L752.7,879.3 L753.9,862.9 L755.1,862.9 L756.3,879.3 L756.4,879.3 L757.6,862.9 L757.6,862.9 L758.8,879.3 L773.5,879.3 L774.7,862.9 L774.7,862.9 L775.9,879.3 L780.2,879.3 L781.4,862.9 L781.4,862.9 L782.6,879.3 L795.3,879.3 L796.5,862.9 L796.5,862.9 L797.7,879.3 L799.0,879.3 L800.2,862.9 L800.2,862.9 L801.4,879.3 L803.8,879.3 L805.0,862.9 L805.0,862.9 L806.2,879.3 L815.5,879.3 L816.7,862.9 L817.9,862.9 L819.1,879.3 L835.6,879.3 L836.8,862.9 L838.0,862.9 L839.2,879.3 L842.3,879.3 L843.5,862.9 L843.5,862.9 L844.7,879.3 L870.2,879.3 L871.4,862.9 L871.4,862.9 L872.6,879.3 L875.1,879.3 L876.3,862.9 L876.3,862.9 L877.5,879.3 L880.0,879.3 L881.2,862.9 L881.2,862.9 L882.4,879.3 L892.7,879.3 L893.9,862.9 L895.1,862.9 L896.3,879.3 L897.6,879.3 L898.8,862.9 L898.8,862.9 L900.0,879.3 L900.0,879.3 L901.2,862.9 L901.2,862.9 L902.4,879.3 L902.5,879.3 L903.7,862.9 L904.9,862.9 L906.1,879.3 L913.9,879.3 L915.1,862.9 L915.1,862.9 L916.3,879.3 L929.7,879.3 L930.9,862.9 L933.3,862.9 L934.5,879.3 L934.6,879.3 L935.8,862.9 L935.8,862.9 L937.0,879.3 L937.0,879.3 L938.2,862.9 L938.2,862.9 L939.4,879.3 L951.5,879.3 L952.7,862.9 L952.7,862.9 L953.9,879.3 L956.4,879.3 L957.6,862.9 L957.6,862.9 L958.8,879.3 L961.3,879.3 L962.5,862.9 L964.9,862.9 L966.1,879.3 L966.1,879.3 L967.3,862.9 L967.3,862.9 L968.5,879.3 L968.6,879.3 L969.8,862.9 L969.8,862.9 L971.0,879.3 L971.0,879.3 L972.2,862.9 L972.2,862.9 L973.4,879.3 L974.3,879.3 L975.5,862.9 L977.9,862.9 L979.1,879.3 L979.2,879.3 L980.4,862.9 L981.6,862.9 L982.8,879.3 L984.1,879.3 L985.3,862.9 L985.3,862.9 L986.5,879.3 L998.5,879.3 L999.7,862.9 L1000.9,862.9 L1002.1,879.3 L1030.4,879.3 L1031.6,862.9 L1034.0,862.9 L1035.2,879.3 L1043.9,879.3 L1045.1,862.9 L1046.3,862.9 L1047.5,879.3 L1048.8,879.3 L1050.0,862.9 L1051.2,862.9 L1052.4,879.3 L1052.4,879.3 L1053.6,862.9 L1054.8,862.9 L1056.0,879.3 L1060.7,879.3 L1061.9,862.9 L1061.9,862.9 L1063.1,879.3 L1077.5,879.3 L1078.7,862.9 L1079.9,862.9 L1081.1,879.3 L1082.3,879.3 L1083.5,862.9 L1085.9,862.9 L1087.1,879.3 L1111.1,879.3 L1112.3,862.9 L1113.5,862.9 L1114.7,879.3 L1114.7,879.3 L1115.9,862.9 L1115.9,862.9 L1117.1,879.3 L1117.2,879.3 L1118.4,862.9 L1118.4,862.9 L1119.6,879.3 L1119.5,879.3 L1120.0,862.9 L1155.9,862.9 L1156.5,975.0 L1157.9,975.0 L1158.5,862.9 L1159.6,879.3 L1160.5,879.3 L1162.1,879.3 L1163.3,862.9 L1163.3,862.9 L1164.5,879.3 L1164.5,879.3 L1165.7,862.9 L1165.7,862.9 L1166.9,879.3 L1168.2,879.3 L1169.4,862.9 L1170.6,862.9 L1171.8,879.3 L1175.5,879.3 L1176.7,862.9 L1179.1,862.9 L1180.3,879.3 L1182.8,879.3 L1184.0,862.9 L1186.4,862.9 L1187.6,879.3 L1187.7,879.3 L1188.9,862.9 L1188.9,862.9 L1190.1,879.3 L1191.3,879.3 L1192.5,862.9 L1192.5,862.9 L1193.7,879.3 L1196.2,879.3 L1197.4,862.9 L1197.4,862.9 L1198.6,879.3 L1198.7,879.3 L1199.9,862.9 L1201.1,862.9 L1202.3,879.3 L1204.8,879.3 L1206.0,862.9 L1206.0,862.9 L1207.2,879.3 L1209.6,879.3 L1210.8,862.9 L1210.8,862.9 L1212.0,879.3 L1214.5,879.3 L1215.7,862.9 L1215.7,862.9 L1216.9,879.3 L1217.0,879.3 L1218.2,862.9 L1219.4,862.9 L1220.6,879.3 L1231.2,879.3 L1232.4,862.9 L1232.4,862.9 L1233.6,879.3 L1239.6,879.3 L1240.8,862.9 L1240.8,862.9 L1242.0,879.3 L1243.2,879.3 L1244.4,862.9 L1244.4,862.9 L1245.6,879.3 L1245.7,879.3 L1246.9,862.9 L1246.9,862.9 L1248.1,879.3 L1248.1,879.3 L1249.3,862.9 L1249.3,862.9 L1250.5,879.3 L1253.0,879.3 L1254.2,862.9 L1254.2,862.9 L1255.4,879.3 L1255.4,879.3 L1256.6,862.9 L1256.6,862.9 L1257.8,879.3 L1259.1,879.3 L1260.3,862.9 L1262.7,862.9 L1263.9,879.3 L1266.4,879.3 L1267.6,862.9 L1268.8,862.9 L1270.0,879.3 L1271.3,879.3 L1272.5,862.9 L1273.7,862.9 L1274.9,879.3 L1276.2,879.3 L1277.4,862.9 L1277.4,862.9 L1278.6,879.3 L1279.8,879.3 L1281.0,862.9 L1282.2,862.9 L1283.4,879.3 L1331.9,879.3 L1333.1,862.9 L1334.3,862.9 L1335.5,879.3 L1336.8,879.3 L1338.0,862.9 L1338.0,862.9 L1339.2,879.3 L1339.3,879.3 L1340.5,862.9 L1340.5,862.9 L1341.7,879.3 L1341.7,879.3 L1342.9,862.9 L1344.1,862.9 L1345.3,879.3 L1346.6,879.3 L1347.8,862.9 L1347.8,862.9 L1349.0,879.3 L1349.0,879.3 L1350.2,862.9 L1352.6,862.9 L1353.8,879.3 L1358.8,879.3 L1360.0,862.9 L1362.4,862.9 L1363.6,879.3 L1363.7,879.3 L1364.9,862.9 L1366.1,862.9 L1367.3,879.3 L1367.4,879.3 L1368.6,862.9 L1369.8,862.9 L1371.0,879.3 L1372.2,879.3 L1373.4,862.9 L1374.6,862.9 L1375.8,879.3 L1377.1,879.3 L1378.3,862.9 L1378.3,862.9 L1379.5,879.3 L1379.6,879.3 L1380.8,862.9 L1382.0,862.9 L1383.2,879.3 L1386.9,879.3 L1388.1,862.9 L1388.1,862.9 L1389.3,879.3 L1389.3,879.3 L1390.5,862.9 L1390.5,862.9 L1391.7,879.3 L1391.8,879.3 L1393.0,862.9 L1395.4,862.9 L1396.6,879.3 L1396.6,879.3 L1397.8,862.9 L1397.8,862.9 L1399.0,879.3 L1399.1,879.3 L1400.3,862.9 L1402.7,862.9 L1403.9,879.3 L1405.2,879.3 L1406.4,862.9 L1407.6,862.9 L1408.8,879.3 L1419.3,879.3 L1420.5,862.9 L1420.5,862.9 L1421.7,879.3 L1426.0,879.3 L1427.2,862.9 L1427.2,862.9 L1428.4,879.3 L1442.8,879.3 L1444.0,862.9 L1446.4,862.9 L1447.6,879.3 L1447.7,879.3 L1448.9,862.9 L1448.9,862.9 L1450.1,879.3 L1450.1,879.3 L1451.3,862.9 L1451.3,862.9 L1452.5,879.3 L1452.6,879.3 L1453.8,862.9 L1453.8,862.9 L1455.0,879.3 L1455.0,879.3 L1456.2,862.9 L1458.6,862.9 L1459.8,879.3 L1463.0,879.3 L1464.2,862.9 L1465.4,862.9 L1466.6,879.3 L1467.8,879.3 L1469.0,862.9 L1470.2,862.9 L1471.4,879.3 L1472.7,879.3 L1473.9,862.9 L1473.9,862.9 L1475.1,879.3 L1477.6,879.3 L1478.8,862.9 L1478.8,862.9 L1480.0,879.3 L1488.1,879.3 L1489.3,862.9 L1490.5,862.9 L1491.7,879.3 L1493.0,879.3 L1494.2,862.9 L1494.2,862.9 L1495.4,879.3 L1495.5,879.3 L1496.7,862.9 L1496.7,862.9 L1497.9,879.3 L1499.9,879.3 L1501.1,862.9 L1501.1,862.9 L1502.3,879.3 L1504.8,879.3 L1506.0,862.9 L1507.2,862.9 L1508.4,879.3 L1509.7,879.3 L1510.9,862.9 L1510.9,862.9 L1512.1,879.3 L1514.5,879.3 L1515.7,862.9 L1515.7,862.9 L1516.9,879.3 L1517.0,879.3 L1518.2,862.9 L1519.4,862.9 L1520.6,879.3 L1531.8,879.3 L1533.0,862.9 L1533.0,862.9 L1534.2,879.3 L1540.2,879.3 L1541.4,862.9 L1541.4,862.9 L1542.6,879.3 L1542.7,879.3 L1543.9,862.9 L1545.1,862.9 L1546.3,879.3 L1550.0,879.3 L1551.2,862.9 L1551.2,862.9 L1552.4,879.3 L1552.4,879.3 L1553.6,862.9 L1554.8,862.9 L1556.0,879.3 L1557.3,879.3 L1558.5,862.9 L1559.7,862.9 L1560.9,879.3 L1561.0,879.3 L1561.6,879.3 L1563.5,895.7 L1566.0,895.7 L1567.0,879.3 L1569.0,879.3 L1570.3,895.7 L1572.0,895.7 L1572.8,912.1 L1574.2,895.7 L1576.0,895.7 L1577.0,879.3 L1584.0,879.3 L1585.2,895.7 L1593.3,895.7 L1594.6,879.3 L1595.0,879.3 L1598.5,879.3 L1599.7,862.9 L1599.7,862.9 L1600.9,879.3 L1600.9,879.3 L1602.1,862.9 L1604.5,862.9 L1605.7,879.3 L1605.8,879.3 L1607.0,862.9 L1608.2,862.9 L1609.4,879.3 L1610.7,879.3 L1611.9,862.9 L1611.9,862.9 L1613.1,879.3 L1614.5,879.3 L1615.3,862.9 L1648.0,862.9 L1648.5,975.0 L1650.7,975.0 L1651.2,830.0 L1655.5,830.0 L1656.8,813.6 L1661.0,813.6" fill="none" stroke="#0a28ff" stroke-width="2" stroke-linejoin="round" clip-path="url(#c2)"/>
<path d="M173.0,1356.0 L174.4,1306.0 L175.6,1284.0 L176.7,1276.5 L178.0,1283.0 L179.0,1288.7 L180.3,1288.0 L181.5,1292.0 L182.6,1297.0 L183.9,1301.7 L185.2,1296.0 L186.2,1292.0 L187.2,1296.0 L188.0,1298.5 L189.2,1298.1 L190.4,1299.6 L191.6,1295.8 L192.9,1293.6 L194.1,1296.4 L195.3,1298.9 L196.5,1299.0 L197.7,1293.7 L199.0,1293.2 L200.2,1297.6 L201.4,1299.1 L202.6,1300.9 L203.8,1299.4 L205.1,1296.1 L206.3,1296.9 L207.5,1301.3 L208.7,1296.1 L209.9,1292.4 L211.2,1292.0 L212.4,1294.7 L213.6,1295.3 L214.8,1294.4 L216.0,1294.9 L217.3,1296.2 L218.5,1297.8 L219.7,1298.4 L220.9,1295.2 L222.1,1291.6 L223.4,1294.5 L224.6,1292.2 L225.8,1292.7 L227.0,1291.6 L228.2,1293.7 L229.5,1293.6 L230.7,1297.7 L231.9,1303.4 L233.1,1298.3 L234.3,1296.4 L235.6,1292.7 L236.8,1294.3 L238.0,1296.8 L239.2,1296.0 L240.4,1300.8 L241.7,1295.3 L242.9,1293.6 L244.1,1295.5 L245.3,1295.4 L246.5,1299.1 L247.8,1296.3 L249.0,1297.0 L250.2,1297.0 L251.4,1297.7 L252.6,1295.9 L253.9,1293.3 L255.1,1297.4 L256.3,1299.5 L257.5,1298.7 L258.7,1296.5 L260.0,1295.1 L261.2,1298.0 L262.4,1299.3 L263.6,1300.4 L264.8,1297.2 L266.1,1297.9 L267.3,1298.3 L268.5,1297.7 L269.7,1297.3 L270.9,1296.6 L272.2,1294.4 L273.4,1293.3 L274.6,1295.2 L275.8,1298.6 L277.0,1301.1 L278.3,1300.6 L279.5,1300.1 L280.7,1299.5 L281.9,1298.7 L283.1,1297.8 L284.4,1299.5 L285.6,1300.8 L286.8,1296.2 L288.0,1295.8 L289.2,1300.6 L290.5,1298.9 L291.7,1299.3 L292.9,1298.2 L294.1,1295.9 L295.3,1302.5 L296.6,1302.3 L297.8,1298.5 L299.0,1298.2 L300.2,1296.4 L301.4,1294.1 L302.7,1295.6 L303.9,1297.8 L305.1,1299.7 L306.3,1298.8 L307.5,1297.9 L308.8,1298.9 L310.0,1296.0 L311.2,1298.4 L312.4,1299.2 L313.6,1295.0 L314.9,1291.1 L316.1,1292.9 L317.3,1296.5 L318.5,1298.8 L319.7,1299.6 L321.0,1295.0 L322.2,1296.0 L323.4,1297.7 L324.6,1294.6 L325.8,1291.0 L327.1,1298.1 L328.3,1303.1 L329.5,1299.7 L330.7,1294.5 L331.9,1294.8 L333.2,1298.3 L334.4,1302.8 L335.6,1299.6 L336.8,1298.1 L338.0,1300.0 L339.3,1298.6 L340.5,1300.2 L341.7,1295.7 L342.9,1295.2 L344.1,1298.7 L345.4,1300.7 L346.6,1299.1 L347.8,1296.1 L349.0,1291.5 L350.2,1292.5 L351.5,1289.9 L352.7,1294.5 L353.9,1296.4 L355.1,1295.7 L356.3,1297.0 L357.6,1295.7 L358.8,1294.4 L360.0,1295.2 L361.2,1296.4 L362.4,1296.6 L363.7,1293.7 L364.9,1292.4 L366.1,1292.0 L367.3,1298.0 L368.5,1298.6 L369.8,1294.3 L371.0,1291.9 L372.2,1290.9 L373.4,1293.7 L374.6,1296.3 L375.9,1299.7 L377.1,1295.8 L378.3,1290.8 L379.5,1288.9 L380.7,1296.0 L382.0,1294.7 L383.2,1290.9 L384.4,1292.6 L385.6,1293.4 L386.8,1302.6 L388.1,1300.3 L389.3,1301.3 L390.5,1293.2 L391.7,1289.5 L392.9,1291.9 L394.2,1291.5 L395.4,1293.6 L396.6,1289.6 L397.8,1292.1 L399.0,1298.4 L400.3,1298.9 L401.5,1292.2 L402.7,1291.1 L403.9,1296.7 L405.1,1297.1 L406.4,1292.9 L407.6,1292.3 L408.8,1292.2 L410.0,1291.5 L411.2,1293.8 L412.5,1298.4 L413.7,1299.6 L414.9,1300.9 L416.1,1296.8 L417.3,1294.5 L418.6,1293.1 L419.8,1293.7 L421.0,1291.2 L422.2,1291.0 L423.4,1297.1 L424.7,1300.3 L425.9,1299.7 L427.1,1299.7 L428.3,1296.8 L429.5,1294.3 L430.8,1295.2 L432.0,1294.2 L433.2,1291.7 L434.4,1289.9 L435.6,1291.1 L436.9,1294.9 L438.1,1295.9 L439.3,1295.9 L440.5,1299.1 L441.7,1297.8 L443.0,1298.4 L444.2,1298.7 L445.4,1293.5 L446.6,1291.2 L447.8,1295.9 L449.1,1295.9 L450.3,1298.9 L451.5,1298.5 L452.7,1299.3 L453.9,1297.1 L455.2,1292.2 L456.4,1295.8 L457.6,1294.6 L458.8,1293.6 L460.0,1295.2 L461.3,1294.4 L462.5,1299.8 L463.7,1298.3 L464.9,1292.8 L466.1,1292.1 L467.4,1290.4 L468.6,1295.0 L469.8,1297.4 L471.0,1295.4 L472.2,1296.8 L473.5,1298.1 L474.7,1298.6 L475.9,1294.8 L477.1,1293.5 L478.3,1295.4 L479.6,1301.0 L480.8,1300.3 L482.0,1297.2 L483.2,1297.0 L484.4,1297.0 L485.7,1296.8 L486.9,1295.7 L488.1,1294.4 L489.3,1292.5 L490.5,1294.9 L491.8,1300.0 L493.0,1298.6 L494.2,1296.5 L495.4,1295.6 L496.6,1296.3 L497.9,1296.4 L499.1,1294.8 L500.3,1296.1 L501.5,1296.1 L502.7,1293.8 L504.0,1292.8 L505.2,1292.2 L506.4,1293.3 L507.6,1295.5 L508.8,1290.7 L510.1,1293.0 L511.3,1293.6 L512.5,1293.9 L513.7,1296.3 L514.9,1298.4 L516.2,1296.5 L517.4,1294.8 L518.6,1293.9 L519.8,1295.4 L521.0,1297.3 L522.3,1294.3 L523.5,1291.5 L524.7,1290.8 L525.9,1290.8 L527.1,1292.1 L528.4,1297.3 L529.6,1296.9 L530.8,1296.2 L532.0,1298.3 L533.2,1295.5 L534.5,1297.4 L535.7,1296.8 L536.9,1291.3 L538.1,1290.0 L539.3,1292.8 L540.6,1298.0 L541.8,1298.4 L543.0,1294.4 L544.2,1296.9 L545.4,1295.2 L546.7,1294.0 L547.9,1293.8 L549.1,1293.1 L550.3,1290.3 L551.5,1291.0 L552.8,1292.3 L554.0,1297.4 L555.2,1303.0 L556.4,1303.4 L557.6,1295.5 L558.9,1290.9 L560.1,1292.7 L561.3,1294.5 L562.5,1296.9 L563.7,1297.8 L565.0,1294.9 L566.2,1294.4 L567.4,1296.3 L568.6,1291.6 L569.8,1292.8 L571.1,1294.5 L572.3,1295.4 L573.5,1295.5 L574.7,1294.9 L575.9,1295.2 L577.2,1293.5 L578.4,1294.0 L579.6,1298.7 L580.8,1297.7 L582.0,1295.6 L583.3,1291.9 L584.5,1294.5 L585.7,1296.4 L586.9,1293.9 L588.1,1296.9 L589.4,1295.8 L590.6,1296.2 L591.8,1295.8 L593.0,1297.0 L594.2,1298.4 L595.5,1296.8 L596.7,1298.6 L597.9,1294.3 L599.1,1293.5 L600.3,1296.0 L601.6,1293.5 L602.8,1294.8 L604.0,1298.6 L605.2,1298.1 L606.4,1292.8 L607.7,1297.1 L608.9,1301.6 L610.1,1299.9 L611.3,1295.7 L612.5,1294.1 L613.8,1293.9 L615.0,1292.8 L616.2,1294.3 L617.4,1295.2 L618.6,1296.4 L619.9,1298.6 L621.1,1295.3 L622.3,1293.2 L623.5,1296.7 L624.7,1294.0 L626.0,1294.2 L627.2,1295.2 L628.4,1294.5 L629.6,1293.3 L630.4,1295.0 L663.8,1295.0 L665.0,1295.4 L666.2,1295.6 L667.4,1298.5 L668.7,1296.6 L669.9,1291.2 L671.1,1292.5 L672.3,1296.6 L673.5,1297.0 L674.8,1297.4 L676.0,1298.0 L677.2,1298.1 L678.4,1299.5 L679.6,1295.5 L680.9,1294.9 L682.1,1297.1 L683.3,1298.6 L684.5,1299.5 L685.7,1299.8 L687.0,1296.8 L688.2,1298.8 L689.4,1292.2 L690.6,1293.7 L691.8,1296.4 L693.1,1301.4 L694.3,1299.0 L695.5,1293.6 L696.7,1289.3 L697.9,1291.8 L699.2,1293.6 L700.4,1297.0 L701.6,1301.7 L702.8,1299.2 L704.0,1296.0 L705.3,1292.5 L706.5,1291.6 L707.7,1293.5 L708.9,1296.0 L710.1,1301.5 L711.4,1295.7 L712.6,1293.9 L713.8,1297.1 L715.0,1294.9 L716.2,1292.8 L717.5,1296.7 L718.7,1293.9 L719.9,1291.6 L721.1,1294.9 L722.3,1296.0 L723.6,1294.9 L724.8,1297.0 L726.0,1296.8 L727.2,1292.1 L728.4,1287.9 L729.7,1288.0 L730.9,1294.3 L732.1,1299.1 L733.3,1300.0 L734.5,1301.2 L735.8,1301.3 L737.0,1292.9 L738.2,1297.5 L739.4,1293.8 L740.6,1297.0 L741.9,1297.6 L743.1,1296.0 L744.3,1294.4 L745.5,1293.4 L746.7,1296.8 L748.0,1299.1 L749.2,1296.7 L750.4,1296.7 L751.6,1295.1 L752.8,1295.4 L754.1,1293.9 L755.3,1295.8 L756.5,1295.6 L757.7,1295.7 L758.9,1293.3 L760.2,1291.8 L761.4,1294.3 L762.6,1298.5 L763.8,1299.3 L765.0,1295.9 L766.3,1297.0 L767.5,1297.4 L768.7,1295.0 L769.9,1291.5 L771.1,1293.6 L772.4,1293.4 L773.6,1297.3 L774.8,1297.9 L776.0,1295.0 L777.2,1289.8 L778.5,1295.2 L779.7,1296.4 L780.9,1293.5 L782.1,1296.9 L783.3,1296.4 L784.6,1294.9 L785.8,1293.4 L787.0,1292.9 L788.2,1296.8 L789.4,1303.7 L790.7,1299.6 L791.9,1297.0 L793.1,1295.1 L794.3,1294.7 L795.5,1294.7 L796.8,1295.3 L798.0,1298.5 L799.2,1297.8 L800.4,1298.2 L801.6,1300.6 L802.9,1298.4 L804.1,1298.1 L805.3,1298.4 L806.5,1296.4 L807.7,1295.4 L809.0,1298.6 L810.2,1296.3 L811.4,1295.1 L812.6,1294.2 L813.8,1295.7 L815.1,1295.5 L816.3,1296.6 L817.5,1296.4 L818.7,1293.3 L819.9,1292.1 L821.2,1296.3 L822.4,1298.6 L823.6,1297.0 L824.8,1293.7 L826.0,1296.4 L827.3,1297.1 L828.5,1296.8 L829.7,1296.5 L830.9,1295.3 L832.1,1296.5 L833.4,1297.6 L834.6,1294.1 L835.8,1291.8 L837.0,1294.5 L838.2,1294.8 L839.5,1291.0 L840.7,1293.3 L841.9,1296.6 L843.1,1296.0 L844.3,1295.1 L845.6,1293.7 L846.8,1298.5 L848.0,1300.7 L849.2,1296.3 L850.4,1293.3 L851.7,1293.4 L852.9,1297.4 L854.1,1296.3 L855.3,1295.0 L856.5,1298.8 L857.8,1299.0 L859.0,1296.5 L860.2,1291.9 L861.4,1294.6 L862.6,1292.4 L863.9,1293.8 L865.1,1297.8 L866.3,1300.2 L867.5,1298.3 L868.7,1293.8 L870.0,1293.7 L871.2,1297.6 L872.4,1299.0 L873.6,1299.6 L874.8,1298.7 L876.1,1295.3 L877.3,1292.5 L878.5,1290.8 L879.7,1297.1 L880.9,1300.6 L882.2,1295.2 L883.4,1294.0 L884.6,1296.5 L885.8,1295.4 L887.0,1291.6 L888.3,1291.6 L889.5,1293.5 L890.7,1298.7 L891.9,1295.7 L893.1,1298.2 L894.4,1301.9 L895.6,1302.4 L896.8,1301.4 L898.0,1299.5 L899.2,1293.5 L900.5,1293.3 L901.7,1290.0 L902.9,1296.3 L904.1,1300.4 L905.3,1293.9 L906.6,1294.8 L907.8,1294.0 L909.0,1298.8 L910.2,1299.3 L911.4,1296.8 L912.7,1300.2 L913.9,1298.2 L915.1,1298.9 L916.3,1296.8 L917.5,1294.1 L918.8,1294.0 L920.0,1295.3 L921.2,1296.9 L922.4,1297.8 L923.6,1300.9 L924.9,1296.2 L926.1,1293.5 L927.3,1292.7 L928.5,1291.8 L929.7,1290.5 L931.0,1292.5 L932.2,1296.7 L933.4,1295.9 L934.6,1295.2 L935.8,1296.8 L937.1,1298.7 L938.3,1298.3 L939.5,1297.5 L940.7,1294.7 L941.9,1294.2 L943.2,1293.8 L944.4,1294.6 L945.6,1293.8 L946.8,1294.6 L948.0,1292.0 L949.3,1295.6 L950.5,1295.4 L951.7,1296.2 L952.9,1293.8 L954.1,1291.9 L955.4,1294.3 L956.6,1295.8 L957.8,1293.7 L959.0,1293.6 L960.2,1295.1 L961.5,1290.6 L962.7,1288.2 L963.9,1295.9 L965.1,1298.3 L966.3,1292.9 L967.6,1293.8 L968.8,1295.9 L970.0,1291.7 L971.2,1292.2 L972.4,1292.9 L973.7,1293.7 L974.9,1292.2 L976.1,1297.0 L977.3,1296.9 L978.5,1296.7 L979.8,1294.2 L981.0,1290.8 L982.2,1293.3 L983.4,1292.9 L984.6,1294.6 L985.9,1293.9 L987.1,1294.7 L988.3,1296.0 L989.5,1298.4 L990.7,1297.7 L992.0,1294.2 L993.2,1296.3 L994.4,1299.7 L995.6,1297.5 L996.8,1294.3 L998.1,1294.6 L999.3,1295.4 L1000.5,1297.5 L1001.7,1296.5 L1002.9,1297.9 L1004.2,1299.8 L1005.4,1292.8 L1006.6,1290.5 L1007.8,1289.1 L1009.0,1290.7 L1010.3,1296.2 L1011.5,1297.6 L1012.7,1297.7 L1013.9,1290.9 L1015.1,1292.5 L1016.4,1298.6 L1017.6,1299.1 L1018.8,1298.5 L1020.0,1297.7 L1021.2,1295.6 L1022.5,1294.9 L1023.7,1295.5 L1024.9,1296.7 L1026.1,1295.2 L1027.3,1296.4 L1028.6,1297.5 L1029.8,1292.4 L1031.0,1292.4 L1032.2,1295.2 L1033.4,1289.4 L1034.7,1295.5 L1035.9,1299.7 L1037.1,1296.7 L1038.3,1294.6 L1039.5,1298.6 L1040.8,1300.5 L1042.0,1293.2 L1043.2,1292.2 L1044.4,1294.0 L1045.6,1294.9 L1046.9,1299.9 L1048.1,1297.4 L1049.3,1294.8 L1050.5,1295.4 L1051.7,1293.2 L1053.0,1293.3 L1054.2,1296.9 L1055.4,1299.6 L1056.6,1292.2 L1057.8,1296.0 L1059.1,1299.8 L1060.3,1300.0 L1061.5,1301.3 L1062.7,1298.5 L1063.9,1296.5 L1065.2,1295.1 L1066.4,1295.0 L1067.6,1298.3 L1068.8,1294.2 L1070.0,1294.4 L1071.3,1294.0 L1072.5,1292.0 L1073.7,1289.7 L1074.9,1293.4 L1076.1,1296.0 L1077.4,1296.9 L1078.6,1297.8 L1079.8,1295.5 L1081.0,1294.3 L1082.2,1296.5 L1083.5,1296.8 L1084.7,1292.9 L1085.9,1290.6 L1087.1,1292.9 L1088.3,1298.1 L1089.6,1298.1 L1090.8,1294.3 L1092.0,1295.8 L1093.2,1298.7 L1094.4,1298.9 L1095.7,1294.8 L1096.9,1295.5 L1098.1,1295.8 L1099.3,1299.2 L1100.5,1300.1 L1101.8,1294.2 L1103.0,1295.4 L1104.2,1295.0 L1105.4,1294.5 L1106.6,1293.4 L1107.9,1293.7 L1109.1,1296.2 L1110.3,1300.0 L1111.5,1298.5 L1112.7,1296.7 L1114.0,1295.0 L1115.2,1293.2 L1116.4,1294.9 L1117.6,1298.5 L1118.8,1299.4 L1120.0,1295.0 L1156.4,1295.0 L1157.0,1243.0 L1158.2,1318.5 L1159.4,1296.0 L1160.5,1296.7 L1161.7,1293.2 L1162.9,1295.3 L1164.2,1296.7 L1165.4,1297.0 L1166.6,1297.7 L1167.8,1298.6 L1169.0,1297.6 L1170.3,1295.7 L1171.5,1293.8 L1172.7,1295.0 L1173.9,1296.3 L1175.1,1299.2 L1176.4,1303.2 L1177.6,1300.7 L1178.8,1297.6 L1180.0,1296.4 L1181.2,1292.5 L1182.5,1293.8 L1183.7,1294.0 L1184.9,1295.4 L1186.1,1292.5 L1187.3,1288.5 L1188.6,1290.7 L1189.8,1295.4 L1191.0,1299.9 L1192.2,1294.5 L1193.4,1297.0 L1194.7,1297.9 L1195.9,1301.7 L1197.1,1300.3 L1198.3,1296.8 L1199.5,1296.4 L1200.8,1296.8 L1202.0,1294.1 L1203.2,1296.9 L1204.4,1295.7 L1205.6,1292.4 L1206.9,1291.9 L1208.1,1292.0 L1209.3,1294.5 L1210.5,1299.0 L1211.7,1295.7 L1213.0,1294.5 L1214.2,1293.6 L1215.4,1297.4 L1216.6,1297.5 L1217.8,1297.5 L1219.1,1292.0 L1220.3,1292.8 L1221.5,1295.4 L1222.7,1296.6 L1223.9,1297.5 L1225.2,1297.5 L1226.4,1295.9 L1227.6,1295.1 L1228.8,1293.6 L1230.0,1295.0 L1231.3,1295.9 L1232.5,1299.3 L1233.7,1298.9 L1234.9,1297.3 L1236.1,1297.9 L1237.4,1296.1 L1238.6,1296.4 L1239.8,1296.8 L1241.0,1299.3 L1242.2,1298.2 L1243.5,1298.6 L1244.7,1296.3 L1245.9,1299.2 L1247.1,1298.5 L1248.3,1299.1 L1249.6,1298.3 L1250.8,1293.5 L1252.0,1290.9 L1253.2,1295.3 L1254.4,1296.9 L1255.7,1294.8 L1256.9,1302.0 L1258.1,1301.7 L1259.3,1299.7 L1260.5,1296.2 L1261.8,1298.9 L1263.0,1299.6 L1264.2,1301.6 L1265.4,1300.7 L1266.6,1294.5 L1267.9,1293.6 L1269.1,1294.1 L1270.3,1295.2 L1271.5,1296.8 L1272.7,1297.7 L1274.0,1293.3 L1275.2,1292.8 L1276.4,1296.1 L1277.6,1295.3 L1278.8,1297.3 L1280.1,1298.3 L1281.3,1299.0 L1282.5,1294.4 L1283.7,1295.3 L1284.9,1299.4 L1286.2,1297.0 L1287.4,1293.7 L1288.6,1294.9 L1289.8,1290.9 L1291.0,1292.0 L1292.3,1297.3 L1293.5,1299.9 L1294.7,1300.6 L1295.9,1296.6 L1297.1,1295.6 L1298.4,1300.0 L1299.6,1299.6 L1300.8,1297.0 L1302.0,1296.7 L1303.2,1296.5 L1304.5,1298.7 L1305.7,1297.2 L1306.9,1298.2 L1308.1,1300.1 L1309.3,1293.2 L1310.6,1291.6 L1311.8,1296.1 L1313.0,1291.2 L1314.2,1287.8 L1315.4,1295.2 L1316.7,1301.6 L1317.9,1299.9 L1319.1,1296.4 L1320.3,1295.1 L1321.5,1296.4 L1322.8,1293.1 L1324.0,1290.9 L1325.2,1294.3 L1326.4,1297.5 L1327.6,1298.4 L1328.9,1296.2 L1330.1,1294.3 L1331.3,1286.4 L1332.5,1293.1 L1333.7,1294.1 L1335.0,1296.2 L1336.2,1296.2 L1337.4,1292.2 L1338.6,1294.1 L1339.8,1294.2 L1341.1,1297.8 L1342.3,1295.0 L1343.5,1297.0 L1344.7,1298.2 L1345.9,1297.0 L1347.2,1295.5 L1348.4,1294.4 L1349.6,1299.1 L1350.8,1297.3 L1352.0,1295.2 L1353.3,1297.1 L1354.5,1298.8 L1355.7,1297.5 L1356.9,1293.8 L1358.1,1295.4 L1359.4,1295.8 L1360.6,1297.0 L1361.8,1294.9 L1363.0,1291.0 L1364.2,1290.8 L1365.5,1293.7 L1366.7,1293.4 L1367.9,1293.0 L1369.1,1293.5 L1370.3,1291.5 L1371.6,1295.8 L1372.8,1295.0 L1374.0,1297.9 L1375.2,1296.7 L1376.4,1298.2 L1377.7,1295.4 L1378.9,1294.6 L1380.1,1298.3 L1381.3,1298.5 L1382.5,1295.1 L1383.8,1296.6 L1385.0,1300.9 L1386.2,1300.0 L1387.4,1294.5 L1388.6,1294.3 L1389.9,1299.9 L1391.1,1303.2 L1392.3,1295.3 L1393.5,1291.1 L1394.7,1293.6 L1396.0,1296.4 L1397.2,1295.1 L1398.4,1295.4 L1399.6,1293.5 L1400.8,1293.5 L1402.1,1292.1 L1403.3,1292.8 L1404.5,1292.4 L1405.7,1296.1 L1406.9,1297.6 L1408.2,1295.3 L1409.4,1294.3 L1410.6,1293.2 L1411.8,1293.1 L1413.0,1294.6 L1414.3,1296.3 L1415.5,1295.3 L1416.7,1296.5 L1417.9,1291.8 L1419.1,1289.9 L1420.4,1294.6 L1421.6,1293.9 L1422.8,1296.6 L1424.0,1293.9 L1425.2,1294.2 L1426.5,1297.8 L1427.7,1297.2 L1428.9,1296.3 L1430.1,1298.7 L1431.3,1298.3 L1432.6,1295.5 L1433.8,1293.5 L1435.0,1292.3 L1436.2,1295.9 L1437.4,1299.7 L1438.7,1301.6 L1439.9,1301.2 L1441.1,1298.4 L1442.3,1298.3 L1443.5,1296.2 L1444.8,1300.3 L1446.0,1299.1 L1447.2,1294.6 L1448.4,1295.0 L1449.6,1296.6 L1450.9,1297.6 L1452.1,1296.2 L1453.3,1295.9 L1454.5,1298.1 L1455.7,1295.8 L1457.0,1292.4 L1458.2,1294.2 L1459.4,1300.3 L1460.6,1298.4 L1461.8,1296.0 L1463.1,1294.0 L1464.3,1293.3 L1465.5,1294.5 L1466.7,1297.2 L1467.9,1296.2 L1469.2,1297.2 L1470.4,1290.6 L1471.6,1292.6 L1472.8,1301.5 L1474.0,1295.6 L1475.3,1292.5 L1476.5,1296.4 L1477.7,1289.6 L1478.9,1292.0 L1480.1,1295.4 L1481.4,1295.0 L1482.6,1293.2 L1483.8,1295.0 L1485.0,1294.3 L1486.2,1294.3 L1487.5,1296.6 L1488.7,1295.6 L1489.9,1294.8 L1491.1,1295.2 L1492.3,1293.5 L1493.6,1297.4 L1494.8,1297.8 L1496.0,1296.1 L1497.2,1293.0 L1498.4,1292.3 L1499.7,1294.1 L1500.9,1294.2 L1502.1,1295.4 L1503.3,1292.5 L1504.5,1294.4 L1505.8,1294.4 L1507.0,1294.9 L1508.2,1296.7 L1509.4,1297.9 L1510.6,1292.4 L1511.9,1294.5 L1513.1,1291.7 L1514.3,1294.4 L1515.5,1296.9 L1516.7,1294.9 L1518.0,1294.9 L1519.2,1295.1 L1520.4,1293.1 L1521.6,1293.4 L1522.8,1294.4 L1524.1,1293.8 L1525.3,1295.0 L1526.5,1297.8 L1527.7,1297.0 L1528.9,1295.6 L1530.2,1298.7 L1531.4,1297.1 L1532.6,1298.0 L1533.8,1297.5 L1535.0,1295.2 L1536.3,1292.6 L1537.5,1293.8 L1538.7,1291.3 L1539.9,1296.2 L1541.1,1300.2 L1542.4,1300.4 L1543.6,1301.5 L1544.8,1301.1 L1546.0,1294.6 L1547.2,1293.4 L1548.5,1291.0 L1549.7,1292.3 L1550.9,1297.1 L1552.1,1296.5 L1553.3,1297.1 L1554.6,1297.0 L1555.8,1296.5 L1557.0,1292.9 L1558.2,1294.2 L1559.4,1294.4 L1560.7,1289.6 L1561.9,1296.2 L1563.1,1297.9 L1564.3,1298.8 L1565.5,1299.5 L1566.8,1296.4 L1568.0,1296.0 L1569.2,1295.3 L1570.4,1295.1 L1571.6,1296.2 L1572.9,1296.4 L1574.1,1297.7 L1575.3,1297.9 L1576.5,1294.5 L1577.7,1292.3 L1579.0,1296.5 L1580.2,1299.3 L1581.4,1292.8 L1582.6,1291.9 L1583.8,1294.7 L1585.1,1297.2 L1586.3,1294.9 L1587.5,1295.5 L1588.7,1299.3 L1589.9,1297.7 L1591.2,1292.5 L1592.4,1294.6 L1593.6,1295.9 L1594.8,1295.3 L1596.0,1297.2 L1597.3,1290.4 L1598.5,1296.0 L1599.7,1296.1 L1600.9,1294.3 L1602.1,1292.5 L1603.4,1294.0 L1604.6,1294.6 L1605.8,1296.9 L1607.0,1298.3 L1608.2,1297.3 L1609.5,1295.8 L1610.7,1298.1 L1611.9,1298.2 L1612.5,1296.0 L1614.3,1289.3 L1648.9,1289.3 L1650.5,1187.0 L1652.0,1236.0 L1653.3,1244.0 L1655.0,1240.0 L1656.5,1228.0 L1657.6,1229.0 L1660.5,1213.0" fill="none" stroke="#0a28ff" stroke-width="2" stroke-linejoin="round" clip-path="url(#c3)"/>
<g stroke="#000" stroke-width="2.2" fill="none">
<rect x="172.0" y="108.0" width="1488.0" height="1280.0"/>
<line x1="172.0" x2="1660.0" y1="534.67" y2="534.67"/><line x1="172.0" x2="1660.0" y1="961.33" y2="961.33"/>
</g>
<g font-family="Liberation Sans, sans-serif" fill="#000" stroke="#000" stroke-width="0.45">
<g stroke-width="0.1">
<text transform="translate(173.50,165.80) scale(1,1.04)" font-size="17.3" text-anchor="start" xml:space="preserve">MAX</text>
<text transform="translate(173.50,195.67) scale(1,1.04)" font-size="17.3" text-anchor="start" xml:space="preserve">AN</text>
<text transform="translate(173.50,259.67) scale(1,1.04)" font-size="17.3" text-anchor="start" xml:space="preserve">TR</text>
<text transform="translate(173.50,285.27) scale(1,1.04)" font-size="17.3" text-anchor="start" xml:space="preserve">AT</text>
<text transform="translate(173.50,345.00) scale(1,1.04)" font-size="17.3" text-anchor="start" xml:space="preserve">UT1</text>
<text transform="translate(173.50,374.87) scale(1,1.04)" font-size="17.3" text-anchor="start" xml:space="preserve">UT2</text>
</g>
<text transform="translate(917.40,96.80) scale(1,1.03)" font-size="32.0" text-anchor="middle" xml:space="preserve">Input File:  sled_2016-07-02T15-33-39ZEDT.strokes.csv --- HR / Pace / Rate / Power</text>
<text transform="translate(196.00,142.50) scale(1,1.04)" font-size="26.3" text-anchor="start" xml:space="preserve">Drag Factor: 136</text>
<text transform="translate(166.20,499.50) scale(1,1.04)" font-size="26.6" text-anchor="end" xml:space="preserve">110</text>
<text transform="translate(166.20,456.84) scale(1,1.04)" font-size="26.6" text-anchor="end" xml:space="preserve">120</text>
<text transform="translate(166.20,414.17) scale(1,1.04)" font-size="26.6" text-anchor="end" xml:space="preserve">130</text>
<text transform="translate(166.20,371.50) scale(1,1.04)" font-size="26.6" text-anchor="end" xml:space="preserve">140</text>
<text transform="translate(166.20,328.84) scale(1,1.04)" font-size="26.6" text-anchor="end" xml:space="preserve">150</text>
<text transform="translate(166.20,286.17) scale(1,1.04)" font-size="26.6" text-anchor="end" xml:space="preserve">160</text>
<text transform="translate(166.20,243.50) scale(1,1.04)" font-size="26.6" text-anchor="end" xml:space="preserve">170</text>
<text transform="translate(166.20,200.84) scale(1,1.04)" font-size="26.6" text-anchor="end" xml:space="preserve">180</text>
<text transform="translate(1669.60,150.96) scale(1,1.04)" font-size="26.6" text-anchor="start" xml:space="preserve">1:35</text>
<text transform="translate(1669.60,186.51) scale(1,1.04)" font-size="26.6" text-anchor="start" xml:space="preserve">1:40</text>
<text transform="translate(1669.60,222.07) scale(1,1.04)" font-size="26.6" text-anchor="start" xml:space="preserve">1:45</text>
<text transform="translate(1669.60,257.62) scale(1,1.04)" font-size="26.6" text-anchor="start" xml:space="preserve">1:50</text>
<text transform="translate(1669.60,293.18) scale(1,1.04)" font-size="26.6" text-anchor="start" xml:space="preserve">1:55</text>
<text transform="translate(1669.60,328.73) scale(1,1.04)" font-size="26.6" text-anchor="start" xml:space="preserve">2:00</text>
<text transform="translate(1669.60,364.29) scale(1,1.04)" font-size="26.6" text-anchor="start" xml:space="preserve">2:05</text>
<text transform="translate(1669.60,399.84) scale(1,1.04)" font-size="26.6" text-anchor="start" xml:space="preserve">2:10</text>
<text transform="translate(1669.60,435.40) scale(1,1.04)" font-size="26.6" text-anchor="start" xml:space="preserve">2:15</text>
<text transform="translate(1669.60,470.96) scale(1,1.04)" font-size="26.6" text-anchor="start" xml:space="preserve">2:20</text>
<text transform="translate(1669.60,506.51) scale(1,1.04)" font-size="26.6" text-anchor="start" xml:space="preserve">2:25</text>
<text transform="translate(164.90,935.71) scale(1,1.04)" font-size="26.6" text-anchor="end" xml:space="preserve">16</text>
<text transform="translate(164.90,902.89) scale(1,1.04)" font-size="26.6" text-anchor="end" xml:space="preserve">18</text>
<text transform="translate(164.90,870.07) scale(1,1.04)" font-size="26.6" text-anchor="end" xml:space="preserve">20</text>
<text transform="translate(164.90,837.25) scale(1,1.04)" font-size="26.6" text-anchor="end" xml:space="preserve">22</text>
<text transform="translate(164.90,804.43) scale(1,1.04)" font-size="26.6" text-anchor="end" xml:space="preserve">24</text>
<text transform="translate(164.90,771.61) scale(1,1.04)" font-size="26.6" text-anchor="end" xml:space="preserve">26</text>
<text transform="translate(164.90,738.79) scale(1,1.04)" font-size="26.6" text-anchor="end" xml:space="preserve">28</text>
<text transform="translate(164.90,705.97) scale(1,1.04)" font-size="26.6" text-anchor="end" xml:space="preserve">30</text>
<text transform="translate(164.90,673.14) scale(1,1.04)" font-size="26.6" text-anchor="end" xml:space="preserve">32</text>
<text transform="translate(164.90,640.32) scale(1,1.04)" font-size="26.6" text-anchor="end" xml:space="preserve">34</text>
<text transform="translate(164.90,607.50) scale(1,1.04)" font-size="26.6" text-anchor="end" xml:space="preserve">36</text>
<text transform="translate(164.90,574.68) scale(1,1.04)" font-size="26.6" text-anchor="end" xml:space="preserve">38</text>
<text transform="translate(164.90,1341.97) scale(1,1.04)" font-size="26.6" text-anchor="end" xml:space="preserve">150</text>
<text transform="translate(164.90,1288.63) scale(1,1.04)" font-size="26.6" text-anchor="end" xml:space="preserve">200</text>
<text transform="translate(164.90,1235.30) scale(1,1.04)" font-size="26.6" text-anchor="end" xml:space="preserve">250</text>
<text transform="translate(164.90,1181.97) scale(1,1.04)" font-size="26.6" text-anchor="end" xml:space="preserve">300</text>
<text transform="translate(164.90,1128.63) scale(1,1.04)" font-size="26.6" text-anchor="end" xml:space="preserve">350</text>
<text transform="translate(164.90,1075.30) scale(1,1.04)" font-size="26.6" text-anchor="end" xml:space="preserve">400</text>
<text transform="translate(172.77,1417.20) scale(1,1.04)" font-size="26.6" text-anchor="middle" xml:space="preserve">0:00</text>
<text transform="translate(287.29,1417.20) scale(1,1.04)" font-size="26.6" text-anchor="middle" xml:space="preserve">0:05</text>
<text transform="translate(401.82,1417.20) scale(1,1.04)" font-size="26.6" text-anchor="middle" xml:space="preserve">0:10</text>
<text transform="translate(516.35,1417.20) scale(1,1.04)" font-size="26.6" text-anchor="middle" xml:space="preserve">0:15</text>
<text transform="translate(630.87,1417.20) scale(1,1.04)" font-size="26.6" text-anchor="middle" xml:space="preserve">0:20</text>
<text transform="translate(745.39,1417.20) scale(1,1.04)" font-size="26.6" text-anchor="middle" xml:space="preserve">0:25</text>
<text transform="translate(859.92,1417.20) scale(1,1.04)" font-size="26.6" text-anchor="middle" xml:space="preserve">0:30</text>
<text transform="translate(974.45,1417.20) scale(1,1.04)" font-size="26.6" text-anchor="middle" xml:space="preserve">0:35</text>
<text transform="translate(1088.97,1417.20) scale(1,1.04)" font-size="26.6" text-anchor="middle" xml:space="preserve">0:40</text>
<text transform="translate(1203.50,1417.20) scale(1,1.04)" font-size="26.6" text-anchor="middle" xml:space="preserve">0:45</text>
<text transform="translate(1318.02,1417.20) scale(1,1.04)" font-size="26.6" text-anchor="middle" xml:space="preserve">0:50</text>
<text transform="translate(1432.55,1417.20) scale(1,1.04)" font-size="26.6" text-anchor="middle" xml:space="preserve">0:55</text>
<text transform="translate(1547.07,1417.20) scale(1,1.04)" font-size="26.6" text-anchor="middle" xml:space="preserve">1:00</text>
<text transform="translate(916.40,1452.50) scale(1,1.04)" font-size="26.6" text-anchor="middle" xml:space="preserve">Time (h:m)</text>
<text transform="translate(106.00,319.60) rotate(-90) scale(1,1.05)" font-size="27.0" text-anchor="middle" xml:space="preserve">BPM</text>
<text transform="translate(118.60,746.60) rotate(-90) scale(1,1.05)" font-size="27.0" text-anchor="middle" xml:space="preserve">SPM</text>
<text transform="translate(104.50,1174.00) rotate(-90) scale(1,1.05)" font-size="27.0" text-anchor="middle" xml:space="preserve">Watts</text>
<text transform="translate(1749.60,319.60) rotate(-90) scale(1,1.04)" font-size="27.0" text-anchor="middle" xml:space="preserve">(sec/500)</text>
</g>
</svg></body></html>
